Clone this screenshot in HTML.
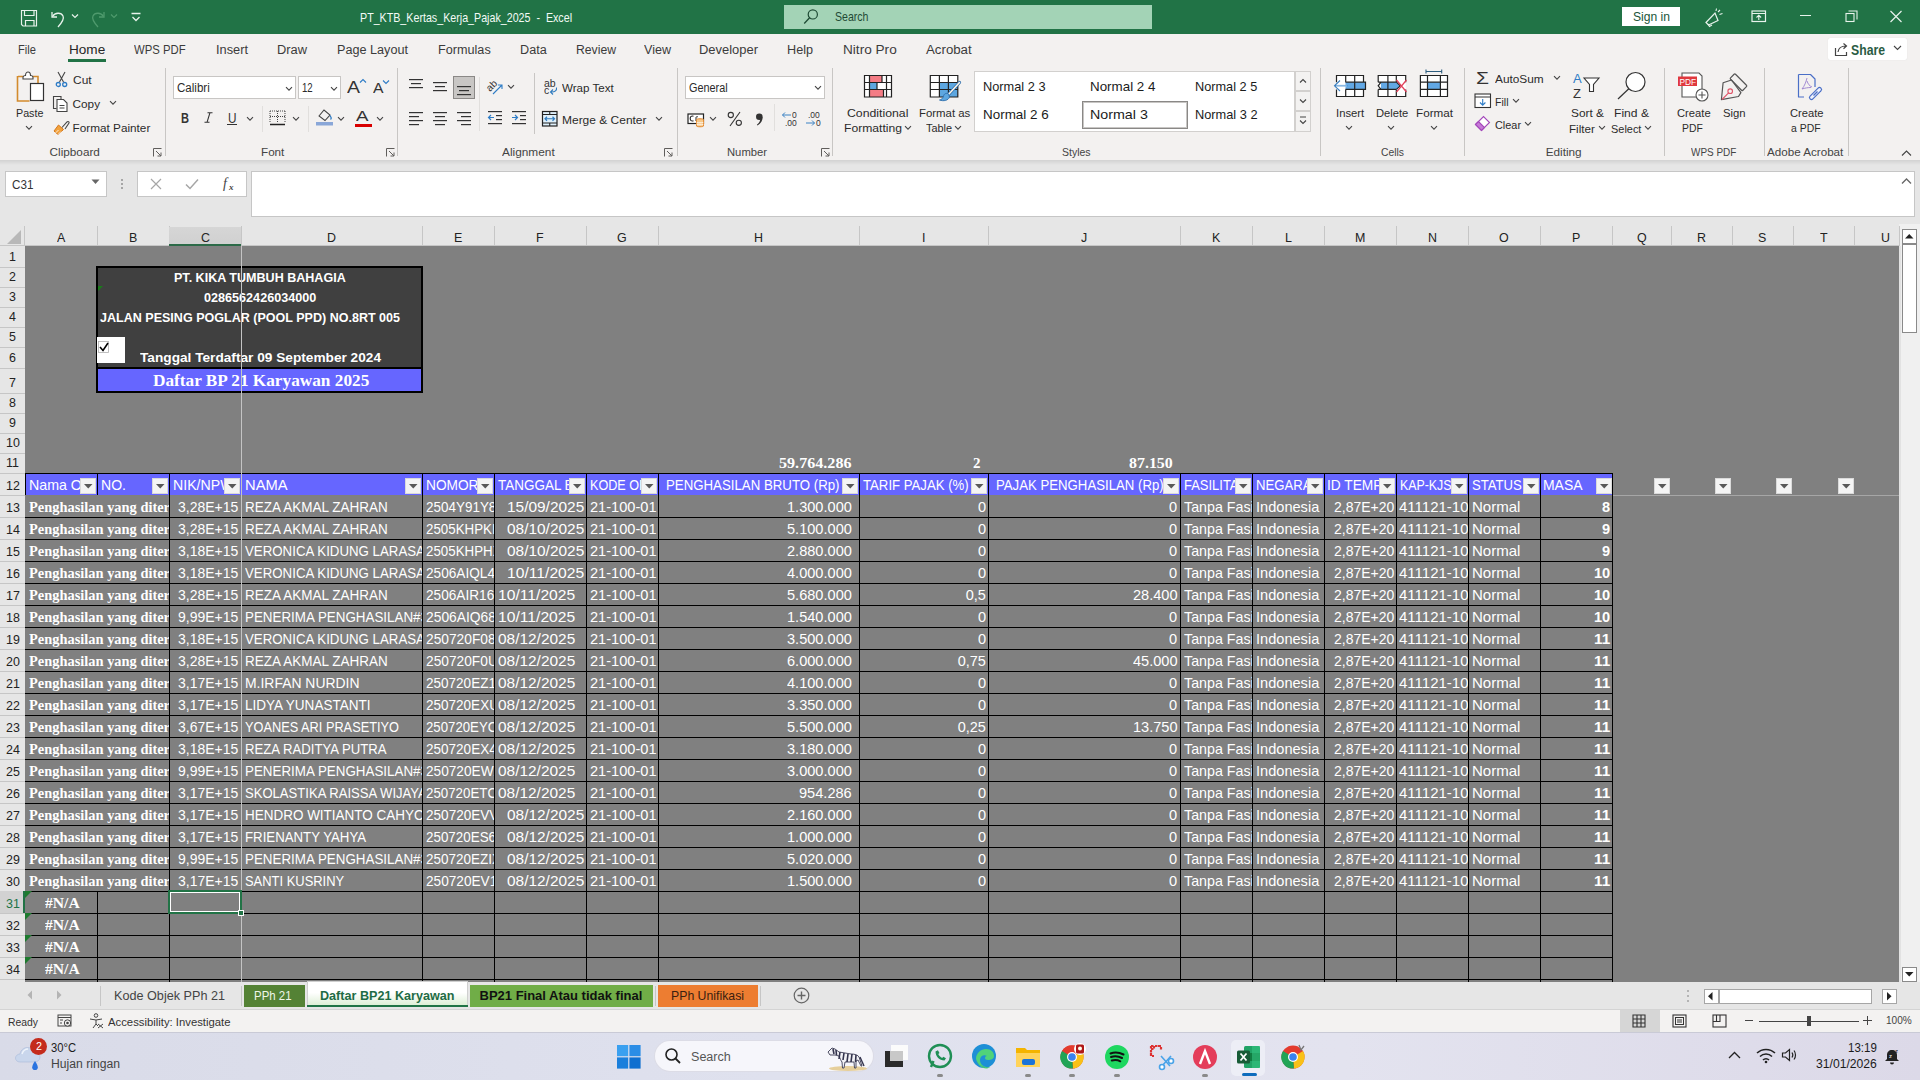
<!DOCTYPE html><html><head><meta charset="utf-8"><style>
html,body{margin:0;padding:0;width:1920px;height:1080px;overflow:hidden;background:#fff;font-family:'Liberation Sans',sans-serif}
.r{position:absolute;margin:0;padding:0}
.t{position:absolute;white-space:pre;line-height:1;transform-origin:0 0}
svg{overflow:visible}
</style></head><body>
<div class="r" style="left:0px;top:0px;width:1920px;height:34px;background:#217346;"></div>
<svg class="r" style="left:20px;top:9px" width="18" height="18" viewBox="0 0 18 18"><path d="M1.5 1.5h15v15.5H3L1.5 15.5z" fill="none" stroke="#e8f3ec" stroke-width="1.2"/><path d="M4.5 1.5v5h9.5v-5M5.5 17v-5.5h8.5V17" fill="none" stroke="#e8f3ec" stroke-width="1.2"/></svg>
<svg class="r" style="left:48px;top:8px" width="20" height="20" viewBox="0 0 20 20"><path d="M4 4v5h5" fill="none" stroke="#e8f3ec" stroke-width="1.3"/><path d="M4.5 8.5C7 4.5 13 4 15 8c1.5 3-0.5 6-5 11" fill="none" stroke="#e8f3ec" stroke-width="1.3"/></svg>
<svg class="r" style="left:71px;top:13px" width="8" height="6" viewBox="0 0 8 6"><path d="M1 1.5l3 3 3-3" fill="none" stroke="#e8f3ec" stroke-width="1.2"/></svg>
<svg class="r" style="left:88px;top:8px" width="20" height="20" viewBox="0 0 20 20"><path d="M16 4v5h-5" fill="none" stroke="#4f9a6d" stroke-width="1.3"/><path d="M15.5 8.5C13 4.5 7 4 5 8c-1.5 3 0.5 6 5 11" fill="none" stroke="#4f9a6d" stroke-width="1.3"/></svg>
<svg class="r" style="left:110px;top:13px" width="8" height="6" viewBox="0 0 8 6"><path d="M1 1.5l3 3 3-3" fill="none" stroke="#4f9a6d" stroke-width="1.2"/></svg>
<svg class="r" style="left:130px;top:12px" width="12" height="10" viewBox="0 0 12 10"><path d="M1.5 1.5h9M2.5 5l3.5 3.5 3.5-3.5" fill="none" stroke="#e8f3ec" stroke-width="1.3"/></svg>
<div class="t" style="left:360.00px;top:12px;font-size:12.75px;color:#f4fbf6;transform:scaleX(0.8380);">PT_KTB_Kertas_Kerja_Pajak_2025  -  Excel</div>
<div class="r" style="left:784px;top:5px;width:368px;height:24px;background:#a3d3b6;"></div>
<svg class="r" style="left:802px;top:8px" width="16" height="18" viewBox="0 0 16 18"><circle cx="10.8" cy="6.4" r="4.6" fill="none" stroke="#1d4a33" stroke-width="1.2"/><path d="M7.6 9.8L2.2 15.5" stroke="#1d4a33" stroke-width="1.3"/></svg>
<div class="t" style="left:834.50px;top:11px;font-size:12.75px;color:#1f4a35;transform:scaleX(0.8293);">Search</div>
<div class="r" style="left:1622px;top:7px;width:58px;height:19px;background:#ffffff;"></div>
<div class="t" style="left:1633.00px;top:10px;font-size:13.0px;color:#21553a;transform:scaleX(0.9309);">Sign in</div>
<svg class="r" style="left:1703px;top:8px" width="22" height="20" viewBox="0 0 22 20"><path d="M3 14.5l9-9.5 3 7.5-9.5 4.5z" fill="none" stroke="#e8f3ec" stroke-width="1.2"/><path d="M5 16l1.5 2.5 2.5-1.5" fill="none" stroke="#e8f3ec" stroke-width="1.2"/><path d="M15 4l2-2M16.5 6.5l3-1M13 3l0.5-2.5" stroke="#e8f3ec" stroke-width="1.1"/></svg>
<svg class="r" style="left:1751px;top:10px" width="16" height="13" viewBox="0 0 16 13"><rect x="1" y="1" width="13.5" height="10.5" fill="none" stroke="#e8f3ec" stroke-width="1.2"/><path d="M1 3.5h13.5M7.8 10V5.5M5.5 7.5l2.3-2.3 2.3 2.3" fill="none" stroke="#e8f3ec" stroke-width="1.1"/></svg>
<div class="r" style="left:1800px;top:15px;width:11px;height:1px;background:#e8f3ec;"></div>
<svg class="r" style="left:1845px;top:10px" width="13" height="13" viewBox="0 0 13 13"><rect x="1" y="3.5" width="8" height="8" fill="none" stroke="#e8f3ec" stroke-width="1.1"/><path d="M3.5 1h8.5v8.5" fill="none" stroke="#e8f3ec" stroke-width="1.1"/></svg>
<svg class="r" style="left:1889px;top:10px" width="14" height="13" viewBox="0 0 14 13"><path d="M1.5 1l11 11M12.5 1l-11 11" stroke="#e8f3ec" stroke-width="1.2"/></svg>
<div class="r" style="left:0px;top:34px;width:1920px;height:126px;background:#f3f1f0;"></div>
<div class="t" style="left:17.50px;top:43px;font-size:13.25px;color:#3b3b3b;transform:scaleX(0.8384);">File</div>
<div class="t" style="left:68.50px;top:43px;font-size:13.5px;color:#262626;transform:scaleX(1.0053);">Home</div>
<div class="t" style="left:134.40px;top:43px;font-size:13.25px;color:#3b3b3b;transform:scaleX(0.8548);">WPS PDF</div>
<div class="t" style="left:216.00px;top:43px;font-size:13.25px;color:#3b3b3b;transform:scaleX(0.9657);">Insert</div>
<div class="t" style="left:277.00px;top:43px;font-size:13.25px;color:#3b3b3b;transform:scaleX(0.9703);">Draw</div>
<div class="t" style="left:337.00px;top:43px;font-size:13.25px;color:#3b3b3b;transform:scaleX(0.9543);">Page Layout</div>
<div class="t" style="left:438.00px;top:43px;font-size:13.25px;color:#3b3b3b;transform:scaleX(0.9544);">Formulas</div>
<div class="t" style="left:520.00px;top:43px;font-size:13.25px;color:#3b3b3b;transform:scaleX(0.9540);">Data</div>
<div class="t" style="left:576.00px;top:43px;font-size:13.25px;color:#3b3b3b;transform:scaleX(0.9207);">Review</div>
<div class="t" style="left:644.00px;top:43px;font-size:13.25px;color:#3b3b3b;transform:scaleX(0.9481);">View</div>
<div class="t" style="left:699.00px;top:43px;font-size:13.25px;color:#3b3b3b;transform:scaleX(0.9770);">Developer</div>
<div class="t" style="left:787.00px;top:43px;font-size:13.25px;color:#3b3b3b;transform:scaleX(0.9541);">Help</div>
<div class="t" style="left:843.00px;top:43px;font-size:13.25px;color:#3b3b3b;transform:scaleX(1.0273);">Nitro Pro</div>
<div class="t" style="left:926.00px;top:43px;font-size:13.25px;color:#3b3b3b;">Acrobat</div>
<div class="r" style="left:68px;top:59px;width:38px;height:3px;background:#217346;"></div>
<div class="r" style="left:1828px;top:38px;width:79px;height:22px;background:#ffffff;border-radius:2px;box-shadow:0 0 1px #d0d0d0"></div>
<svg class="r" style="left:1834px;top:42px" width="16" height="15" viewBox="0 0 16 15"><path d="M1.5 6v7.5h11V10" fill="none" stroke="#444" stroke-width="1.2"/><path d="M4 10c0.5-4 3.5-6 8-6M9.5 1.5l3 2.5-3 2.7" fill="none" stroke="#444" stroke-width="1.2"/></svg>
<div class="t" style="left:1851.00px;top:43px;font-size:14.0px;color:#2a5c43;font-weight:700;transform:scaleX(0.8738);">Share</div>
<svg class="r" style="left:1893px;top:45px" width="9" height="6" viewBox="0 0 9 6"><path d="M1 1l3.5 3.5L8 1" fill="none" stroke="#444" stroke-width="1.1"/></svg>
<svg class="r" style="left:16px;top:71px" width="30" height="32" viewBox="0 0 30 32"><path d="M2 5.5h5M17 5.5h5V19" fill="none" stroke="#d38b2d" stroke-width="1.6"/><path d="M1.5 5v25h12" fill="none" stroke="#d38b2d" stroke-width="1.6"/><path d="M7 6.5c0-2 1.5-2 2.5-2 0-2.5 1.5-3.5 2.5-3.5s2.5 1 2.5 3.5c1 0 2.5 0 2.5 2v1.5H7z" fill="#fff" stroke="#444" stroke-width="1.1"/><rect x="14.5" y="12.5" width="13" height="17" fill="#fff" stroke="#333" stroke-width="1.2"/></svg>
<div class="t" style="left:15.60px;top:107px;font-size:11.75px;color:#2b2b2b;transform:scaleX(0.9120);">Paste</div>
<svg class="r" style="left:25px;top:125px" width="8" height="6" viewBox="0 0 8 6"><path d="M1 1.2l3 3 3-3" fill="none" stroke="#444" stroke-width="1.1"/></svg>
<svg class="r" style="left:55px;top:71px" width="13" height="17" viewBox="0 0 13 17"><path d="M3 1l5.5 10M10 1L4.5 11" stroke="#444" stroke-width="1.1"/><circle cx="3.3" cy="13.5" r="2" fill="none" stroke="#2e7cc6" stroke-width="1.3"/><circle cx="9.7" cy="13.5" r="2" fill="none" stroke="#2e7cc6" stroke-width="1.3"/></svg>
<div class="t" style="left:72.60px;top:74px;font-size:11.75px;color:#2b2b2b;transform:scaleX(1.0173);">Cut</div>
<svg class="r" style="left:52px;top:95px" width="17" height="17" viewBox="0 0 17 17"><path d="M9 4.5V1.5H1.5v12h3" fill="none" stroke="#444" stroke-width="1.1"/><path d="M5 4.5h6.5l3.5 3.5v8.5H5z" fill="#fff" stroke="#444" stroke-width="1.1"/><path d="M7.5 10.5h5M7.5 13h5" stroke="#444" stroke-width="1"/></svg>
<div class="t" style="left:72.60px;top:98px;font-size:11.75px;color:#2b2b2b;">Copy</div>
<svg class="r" style="left:109px;top:100px" width="8" height="6" viewBox="0 0 8 6"><path d="M1 1.2l3 3 3-3" fill="none" stroke="#444" stroke-width="1.1"/></svg>
<svg class="r" style="left:53px;top:118px" width="17" height="17" viewBox="0 0 17 17"><path d="M9 9.5l5-5.5c1-1 2.5 0 2 1l-4 6" fill="none" stroke="#444" stroke-width="1.1"/><path d="M1 13l4.5-6 5 4.5-5.5 5z" fill="#f2a23c" stroke="#d3761b" stroke-width="1"/><path d="M2.5 15l3-3M5 16.5l3-3" stroke="#fff" stroke-width="0.8"/></svg>
<div class="t" style="left:72.60px;top:122px;font-size:11.75px;color:#2b2b2b;">Format Painter</div>
<div class="t" style="left:49.60px;top:146px;font-size:11.75px;color:#444444;">Clipboard</div>
<svg class="r" style="left:153px;top:148px" width="9" height="9" viewBox="0 0 9 9"><path d="M0.5 8.5V0.5h8M3 3l5 5M8 4.5V8H4.5" fill="none" stroke="#605e5c" stroke-width="1"/></svg>
<div class="r" style="left:165px;top:68px;width:1px;height:88px;background:#c8c6c4;"></div>
<div class="r" style="left:173px;top:76px;width:123px;height:23px;background:#ffffff;box-shadow:inset 0 0 0 1px #c8c6c4"></div>
<div class="t" style="left:176.80px;top:82px;font-size:12.5px;color:#2b2b2b;transform:scaleX(0.9231);">Calibri</div>
<svg class="r" style="left:285px;top:86px" width="8" height="6" viewBox="0 0 8 6"><path d="M1 1.2l3 3 3-3" fill="none" stroke="#444" stroke-width="1.1"/></svg>
<div class="r" style="left:298px;top:76px;width:43px;height:23px;background:#ffffff;box-shadow:inset 0 0 0 1px #c8c6c4"></div>
<div class="t" style="left:302.20px;top:82px;font-size:12.5px;color:#2b2b2b;transform:scaleX(0.7697);">12</div>
<svg class="r" style="left:330px;top:86px" width="8" height="6" viewBox="0 0 8 6"><path d="M1 1.2l3 3 3-3" fill="none" stroke="#444" stroke-width="1.1"/></svg>
<div class="t" style="left:347.00px;top:80px;font-size:16.75px;color:#333;transform:scaleX(1.1635);">A</div>
<svg class="r" style="left:359px;top:78px" width="8" height="6" viewBox="0 0 8 6"><path d="M1 4.5l3-3 3 3" fill="none" stroke="#2e7cc6" stroke-width="1.1"/></svg>
<div class="t" style="left:373.00px;top:82px;font-size:13.75px;color:#333;transform:scaleX(1.1448);">A</div>
<svg class="r" style="left:382px;top:79px" width="8" height="6" viewBox="0 0 8 6"><path d="M1 1.5l3 3 3-3" fill="none" stroke="#2e7cc6" stroke-width="1.1"/></svg>
<div class="t" style="left:180.50px;top:111px;font-size:14.5px;color:#333;font-weight:700;transform:scaleX(0.7640);">B</div>
<svg class="r" style="left:204px;top:112px" width="9" height="12" viewBox="0 0 9 12"><path d="M3.5 0.7h5M0.5 10.3h5M6 0.7L3 10.3" fill="none" stroke="#333" stroke-width="1.1"/></svg>
<div class="t" style="left:227.50px;top:111px;font-size:14.5px;color:#333;transform:scaleX(0.8117);">U</div>
<div class="r" style="left:227px;top:124px;width:10px;height:1px;background:#333;"></div>
<svg class="r" style="left:246px;top:116px" width="8" height="6" viewBox="0 0 8 6"><path d="M1 1.2l3 3 3-3" fill="none" stroke="#444" stroke-width="1.1"/></svg>
<div class="r" style="left:262px;top:106px;width:1px;height:26px;background:#e1dfdd;"></div>
<svg class="r" style="left:269px;top:110px" width="17" height="16" viewBox="0 0 17 16"><path d="M1 1h15M1 1v11M16 1v11M1 6.5h15M8.5 1v11" fill="none" stroke="#444" stroke-width="1" stroke-dasharray="1 1"/><path d="M1 14.5h15" stroke="#222" stroke-width="1.5"/></svg>
<svg class="r" style="left:292px;top:116px" width="8" height="6" viewBox="0 0 8 6"><path d="M1 1.2l3 3 3-3" fill="none" stroke="#444" stroke-width="1.1"/></svg>
<div class="r" style="left:308px;top:106px;width:1px;height:26px;background:#e1dfdd;"></div>
<svg class="r" style="left:315px;top:107px" width="19" height="19" viewBox="0 0 19 19"><path d="M4 9l5-6 6 5-5 5.5z" fill="none" stroke="#444" stroke-width="1.1"/><path d="M15 8.5c1 1.5 2 3 0.5 4" fill="none" stroke="#2e7cc6" stroke-width="1.2"/><rect x="1" y="15" width="17" height="3.5" fill="#8aa7d8"/></svg>
<svg class="r" style="left:337px;top:116px" width="8" height="6" viewBox="0 0 8 6"><path d="M1 1.2l3 3 3-3" fill="none" stroke="#444" stroke-width="1.1"/></svg>
<div class="t" style="left:356.00px;top:108px;font-size:15.25px;color:#333;transform:scaleX(1.2288);">A</div>
<div class="r" style="left:355px;top:124px;width:17px;height:3px;background:#d80000;"></div>
<svg class="r" style="left:376px;top:116px" width="8" height="6" viewBox="0 0 8 6"><path d="M1 1.2l3 3 3-3" fill="none" stroke="#444" stroke-width="1.1"/></svg>
<div class="t" style="left:261.40px;top:146px;font-size:11.75px;color:#444444;transform:scaleX(0.9932);">Font</div>
<svg class="r" style="left:386px;top:148px" width="9" height="9" viewBox="0 0 9 9"><path d="M0.5 8.5V0.5h8M3 3l5 5M8 4.5V8H4.5" fill="none" stroke="#605e5c" stroke-width="1"/></svg>
<div class="r" style="left:397px;top:68px;width:1px;height:88px;background:#c8c6c4;"></div>
<div class="r" style="left:453px;top:76px;width:22px;height:23px;background:#c8c6c4;box-shadow:inset 0 0 0 1px #8a8886"></div>
<svg class="r" style="left:409px;top:79px" width="15" height="10" viewBox="0 0 15 10"><rect x="0" y="0" width="14" height="1.2" fill="#333"/><rect x="2" y="4" width="10" height="1.2" fill="#333"/><rect x="0" y="8" width="14" height="1.2" fill="#333"/></svg>
<svg class="r" style="left:433px;top:82px" width="15" height="10" viewBox="0 0 15 10"><rect x="0" y="0" width="14" height="1.2" fill="#333"/><rect x="2" y="4" width="10" height="1.2" fill="#333"/><rect x="0" y="8" width="14" height="1.2" fill="#333"/></svg>
<svg class="r" style="left:457px;top:86px" width="15" height="10" viewBox="0 0 15 10"><rect x="0" y="0" width="14" height="1.2" fill="#333"/><rect x="2" y="4" width="10" height="1.2" fill="#333"/><rect x="0" y="8" width="14" height="1.2" fill="#333"/></svg>
<svg class="r" style="left:409px;top:112px" width="15" height="14" viewBox="0 0 15 14"><rect x="0" y="0" width="14" height="1.2" fill="#333"/><rect x="0" y="4" width="10" height="1.2" fill="#333"/><rect x="0" y="8" width="14" height="1.2" fill="#333"/><rect x="0" y="12" width="10" height="1.2" fill="#333"/></svg>
<svg class="r" style="left:433px;top:112px" width="15" height="14" viewBox="0 0 15 14"><rect x="0" y="0" width="14" height="1.2" fill="#333"/><rect x="2" y="4" width="10" height="1.2" fill="#333"/><rect x="0" y="8" width="14" height="1.2" fill="#333"/><rect x="2" y="12" width="10" height="1.2" fill="#333"/></svg>
<svg class="r" style="left:457px;top:112px" width="15" height="14" viewBox="0 0 15 14"><rect x="0" y="0" width="14" height="1.2" fill="#333"/><rect x="4" y="4" width="10" height="1.2" fill="#333"/><rect x="0" y="8" width="14" height="1.2" fill="#333"/><rect x="4" y="12" width="10" height="1.2" fill="#333"/></svg>
<svg class="r" style="left:486px;top:78px" width="22" height="18" viewBox="0 0 22 18"><text x="0" y="0" font-size="10" font-family="Liberation Sans" fill="#333" transform="translate(4 14) rotate(-45)">ab</text><path d="M7 16L16 7M12 7h4v4" fill="none" stroke="#2e7cc6" stroke-width="1.1"/></svg>
<svg class="r" style="left:507px;top:84px" width="8" height="6" viewBox="0 0 8 6"><path d="M1 1.2l3 3 3-3" fill="none" stroke="#444" stroke-width="1.1"/></svg>
<div class="r" style="left:479px;top:77px;width:1px;height:54px;background:#e1dfdd;"></div>
<svg class="r" style="left:487px;top:111px" width="16" height="14" viewBox="0 0 16 14"><rect x="1" y="0" width="14" height="1.2" fill="#333"/><rect x="9" y="4" width="6" height="1.2" fill="#333"/><rect x="9" y="8" width="6" height="1.2" fill="#333"/><rect x="1" y="12" width="14" height="1.2" fill="#333"/><path d="M7 6.5H1.5M4 4L1.5 6.5 4 9" fill="none" stroke="#2e7cc6" stroke-width="1.2"/></svg>
<svg class="r" style="left:511px;top:111px" width="16" height="14" viewBox="0 0 16 14"><rect x="1" y="0" width="14" height="1.2" fill="#333"/><rect x="9" y="4" width="6" height="1.2" fill="#333"/><rect x="9" y="8" width="6" height="1.2" fill="#333"/><rect x="1" y="12" width="14" height="1.2" fill="#333"/><path d="M1 6.5h5.5M4 4l2.5 2.5L4 9" fill="none" stroke="#2e7cc6" stroke-width="1.2"/></svg>
<div class="r" style="left:534px;top:73px;width:1px;height:61px;background:#c8c6c4;"></div>
<svg class="r" style="left:543px;top:77px" width="16" height="19" viewBox="0 0 16 19"><text x="1" y="9.5" font-size="10.5" font-family="Liberation Sans" fill="#333">ab</text><text x="1" y="17" font-size="10.5" font-family="Liberation Sans" fill="#333">c</text><path d="M13.5 10.5c0.5 3-1.5 4.5-5 4.5M10 12.5L7.5 15 10 17.5" fill="none" stroke="#2f7bbf" stroke-width="1.1"/></svg>
<div class="t" style="left:561.50px;top:82px;font-size:11.75px;color:#2b2b2b;transform:scaleX(0.9855);">Wrap Text</div>
<svg class="r" style="left:541px;top:110px" width="18" height="17" viewBox="0 0 18 17"><rect x="1.5" y="1.5" width="14.5" height="14.5" fill="#dff0fb" stroke="#222" stroke-width="1.2"/><path d="M1.5 4.5h14.5M1.5 13h14.5M8.75 1.5v3M8.75 13v3" fill="none" stroke="#222" stroke-width="1.1"/><path d="M4 8.75h9.5M6 6.8L4 8.75l2 2M11.5 6.8l2 1.95-2 2" fill="none" stroke="#2f7bbf" stroke-width="1.2"/></svg>
<div class="t" style="left:561.50px;top:114px;font-size:11.75px;color:#2b2b2b;transform:scaleX(1.0189);">Merge &amp; Center</div>
<svg class="r" style="left:655px;top:116px" width="8" height="6" viewBox="0 0 8 6"><path d="M1 1.2l3 3 3-3" fill="none" stroke="#444" stroke-width="1.1"/></svg>
<div class="t" style="left:502.30px;top:146px;font-size:11.75px;color:#444444;transform:scaleX(1.0087);">Alignment</div>
<svg class="r" style="left:664px;top:148px" width="9" height="9" viewBox="0 0 9 9"><path d="M0.5 8.5V0.5h8M3 3l5 5M8 4.5V8H4.5" fill="none" stroke="#605e5c" stroke-width="1"/></svg>
<div class="r" style="left:677px;top:68px;width:1px;height:88px;background:#c8c6c4;"></div>
<div class="r" style="left:685px;top:76px;width:140px;height:23px;background:#ffffff;box-shadow:inset 0 0 0 1px #c8c6c4"></div>
<div class="t" style="left:688.80px;top:82px;font-size:12.5px;color:#2b2b2b;transform:scaleX(0.8681);">General</div>
<svg class="r" style="left:814px;top:85px" width="8" height="6" viewBox="0 0 8 6"><path d="M1 1.2l3 3 3-3" fill="none" stroke="#444" stroke-width="1.1"/></svg>
<svg class="r" style="left:687px;top:113px" width="19" height="15" viewBox="0 0 19 15"><rect x="1" y="1" width="15.5" height="9.5" fill="#fff" stroke="#222" stroke-width="1.2"/><path d="M6.5 3.3c-2-.8-3.3.3-3.3 2.2s1.3 3 3.3 2.2" fill="none" stroke="#222" stroke-width="1.1"/><path d="M9 8V4.5c0-1 1.5-1 2-.5" fill="none" stroke="#222" stroke-width="1"/><path d="M9.5 6.5c0-1 7-1 7 0v6.5c0 1-7 1-7 0z" fill="#f7c98b" stroke="#e3892f" stroke-width="1"/><path d="M9.5 9c0 1 7 1 7 0M9.5 11c0 1 7 1 7 0" fill="none" stroke="#fff" stroke-width="0.8"/></svg>
<svg class="r" style="left:709px;top:116px" width="8" height="6" viewBox="0 0 8 6"><path d="M1 1.2l3 3 3-3" fill="none" stroke="#444" stroke-width="1.1"/></svg>
<svg class="r" style="left:727px;top:111px" width="16" height="16" viewBox="0 0 16 16"><circle cx="3.8" cy="4" r="2.6" fill="none" stroke="#333" stroke-width="1.1"/><circle cx="11.8" cy="11.8" r="2.6" fill="none" stroke="#333" stroke-width="1.1"/><path d="M13 1L3 15" stroke="#333" stroke-width="1.1"/></svg>
<svg class="r" style="left:755px;top:113px" width="9" height="13" viewBox="0 0 9 13"><circle cx="4.3" cy="3.8" r="3.3" fill="#333"/><path d="M7.5 4c0.3 3.5-1.5 6.5-5 8.5l-0.6-0.8c2.5-1.7 3.5-4 3.3-6.5z" fill="#333"/></svg>
<div class="r" style="left:774px;top:104px;width:1px;height:27px;background:#e1dfdd;"></div>
<svg class="r" style="left:781px;top:110px" width="18" height="18" viewBox="0 0 18 18"><text x="11" y="7.5" font-size="8.5" font-family="Liberation Sans" fill="#333">0</text><text x="4" y="16" font-size="8.5" font-family="Liberation Sans" fill="#333">.00</text><path d="M10 5H1.5M4 2.5L1.5 5 4 7.5" fill="none" stroke="#3b82c4" stroke-width="1"/></svg>
<svg class="r" style="left:805px;top:110px" width="18" height="18" viewBox="0 0 18 18"><text x="3" y="7.5" font-size="8.5" font-family="Liberation Sans" fill="#333">.00</text><text x="11" y="16" font-size="8.5" font-family="Liberation Sans" fill="#333">0</text><path d="M1 13h8.5M7 10.5L9.5 13 7 15.5" fill="none" stroke="#3b82c4" stroke-width="1"/></svg>
<div class="t" style="left:726.80px;top:146px;font-size:11.75px;color:#444444;transform:scaleX(0.9572);">Number</div>
<svg class="r" style="left:821px;top:148px" width="9" height="9" viewBox="0 0 9 9"><path d="M0.5 8.5V0.5h8M3 3l5 5M8 4.5V8H4.5" fill="none" stroke="#605e5c" stroke-width="1"/></svg>
<div class="r" style="left:832px;top:68px;width:1px;height:88px;background:#c8c6c4;"></div>
<svg class="r" style="left:863px;top:74px" width="30" height="24" viewBox="0 0 30 24"><rect x="1.5" y="1.5" width="27" height="21.5" fill="#fff"/><rect x="6.5" y="1.5" width="12.5" height="7" fill="#f47c85"/><rect x="6.5" y="8.5" width="7.5" height="7" fill="#5ea7e0"/><rect x="6.5" y="15.5" width="14" height="7.5" fill="#f47c85"/><path d="M1.5 1.5h27v21.5h-27zM1.5 8.5h27M1.5 15.5h27M6.5 1.5v21.5M23.5 1.5v21.5M19 1.5v7M14 8.5v7M20.5 15.5v7.5" fill="none" stroke="#222" stroke-width="1.2"/></svg>
<div class="t" style="left:847.20px;top:107px;font-size:11.75px;color:#2b2b2b;transform:scaleX(1.0445);">Conditional</div>
<div class="t" style="left:843.50px;top:122px;font-size:11.75px;color:#2b2b2b;transform:scaleX(1.0329);">Formatting</div>
<svg class="r" style="left:904px;top:125px" width="8" height="6" viewBox="0 0 8 6"><path d="M1 1.2l3 3 3-3" fill="none" stroke="#444" stroke-width="1.1"/></svg>
<svg class="r" style="left:929px;top:74px" width="34" height="30" viewBox="0 0 34 30"><rect x="1.3" y="1.5" width="27.5" height="21.5" fill="#fff"/><rect x="10.4" y="8.5" width="18.4" height="14.5" fill="#5ea7e0"/><path d="M1.3 1.5h27.5v21.5H1.3zM1.3 8.5h27.5M1.3 15.5h27.5M10.4 1.5v21.5M19.4 1.5v21.5" fill="none" stroke="#222" stroke-width="1.2"/><path d="M30.5 8.5L19 21" stroke="#2f6fad" stroke-width="3.2" stroke-linecap="round"/><path d="M30.5 8.5L19 21" stroke="#fdf3e6" stroke-width="1.6" stroke-linecap="round"/><path d="M19.5 20c-2.5-1.5-4.5 0-5 2-.5 2.5-2 3.5-4 4 4 1.5 9 .5 10-3z" fill="#5ea7e0" stroke="#2f6fad" stroke-width="0.9"/></svg>
<div class="t" style="left:918.50px;top:107px;font-size:11.75px;color:#2b2b2b;transform:scaleX(0.9701);">Format as</div>
<div class="t" style="left:925.80px;top:122px;font-size:11.75px;color:#2b2b2b;transform:scaleX(0.9257);">Table</div>
<svg class="r" style="left:954px;top:125px" width="8" height="6" viewBox="0 0 8 6"><path d="M1 1.2l3 3 3-3" fill="none" stroke="#444" stroke-width="1.1"/></svg>
<div class="r" style="left:974px;top:71px;width:321px;height:61px;background:#ffffff;box-shadow:inset 0 0 0 1px #d2d0ce"></div>
<div class="t" style="left:983.10px;top:80px;font-size:13.5px;color:#1b1b1b;transform:scaleX(0.9467);">Normal 2 3</div>
<div class="t" style="left:1089.60px;top:80px;font-size:13.5px;color:#1b1b1b;transform:scaleX(0.9906);">Normal 2 4</div>
<div class="t" style="left:1195.40px;top:80px;font-size:13.5px;color:#1b1b1b;transform:scaleX(0.9421);">Normal 2 5</div>
<div class="t" style="left:983.10px;top:108px;font-size:13.5px;color:#1b1b1b;transform:scaleX(0.9944);">Normal 2 6</div>
<div class="t" style="left:1089.90px;top:108px;font-size:13.5px;color:#1b1b1b;transform:scaleX(1.0555);">Normal 3</div>
<div class="t" style="left:1195.40px;top:108px;font-size:13.5px;color:#1b1b1b;transform:scaleX(0.9467);">Normal 3 2</div>
<div class="r" style="left:1082px;top:101px;width:106px;height:28px;box-shadow:inset 0 0 0 1px #8a8886,inset 0 0 0 2px #c8c6c4"></div>
<div class="r" style="left:1295px;top:71px;width:16px;height:20px;background:#f3f2f1;box-shadow:inset 0 0 0 1px #d2d0ce"></div>
<div class="r" style="left:1295px;top:91px;width:16px;height:20px;background:#f3f2f1;box-shadow:inset 0 0 0 1px #d2d0ce"></div>
<div class="r" style="left:1295px;top:111px;width:16px;height:21px;background:#f3f2f1;box-shadow:inset 0 0 0 1px #d2d0ce"></div>
<svg class="r" style="left:1299px;top:78px" width="8" height="6" viewBox="0 0 8 6"><path d="M1 4.5l3-3 3 3" fill="none" stroke="#444" stroke-width="1.1"/></svg>
<svg class="r" style="left:1299px;top:98px" width="8" height="6" viewBox="0 0 8 6"><path d="M1 1.5l3 3 3-3" fill="none" stroke="#444" stroke-width="1.1"/></svg>
<svg class="r" style="left:1299px;top:116px" width="8" height="10" viewBox="0 0 8 10"><path d="M1 1h6M1 4.5l3 3 3-3" fill="none" stroke="#444" stroke-width="1.1"/></svg>
<div class="t" style="left:1061.80px;top:146px;font-size:11.75px;color:#444444;transform:scaleX(0.8938);">Styles</div>
<div class="r" style="left:1320px;top:68px;width:1px;height:88px;background:#c8c6c4;"></div>
<svg class="r" style="left:1332px;top:74px" width="36" height="24" viewBox="0 0 36 24"><rect x="4.5" y="1.5" width="27" height="21" fill="#fff"/><rect x="13.5" y="8.2" width="20" height="7.2" fill="#62a8e5"/><path d="M4.5 8.2V1.5h27v6.7M4.5 15.4v7.1h27v-7.1M13.7 1.5v6.7M22.7 1.5v21M13.7 15.4v7.1M13.5 8.2h20v7.2h-20" fill="none" stroke="#222" stroke-width="1.2"/><path d="M15.5 11.8H2.5M8 6.5L2.5 11.8 8 17" fill="none" stroke="#3b7fbf" stroke-width="1.1"/><path d="M15 11.8H4" stroke="#9cc7ec" stroke-width="2.2" opacity="0.6"/></svg>
<div class="t" style="left:1335.50px;top:107px;font-size:11.75px;color:#2b2b2b;transform:scaleX(0.9597);">Insert</div>
<svg class="r" style="left:1345px;top:125px" width="8" height="6" viewBox="0 0 8 6"><path d="M1 1.2l3 3 3-3" fill="none" stroke="#444" stroke-width="1.1"/></svg>
<svg class="r" style="left:1376px;top:74px" width="34" height="24" viewBox="0 0 34 24"><rect x="2.2" y="1.5" width="27.5" height="21" fill="#fff"/><rect x="5" y="8.2" width="17" height="7.2" fill="#62a8e5"/><path d="M2.2 8.2V1.5h27.5v6.7M2.2 15.4v7.1h27.5v-7.1M11.9 1.5v21M20.3 1.5v6.7M20.3 15.4v7.1M2.2 8.2h18M2.2 15.4h18M5 8.2l-2.8 3.6 2.8 3.6" fill="none" stroke="#222" stroke-width="1.2"/><path d="M20.3 8.2l4 3.6-4 3.6" fill="#62a8e5" stroke="#222" stroke-width="1.1"/><path d="M20.5 6l10 12M30.5 6l-10 12" stroke="#e5405a" stroke-width="1.2"/></svg>
<div class="t" style="left:1375.60px;top:107px;font-size:11.75px;color:#2b2b2b;transform:scaleX(0.9510);">Delete</div>
<svg class="r" style="left:1387px;top:125px" width="8" height="6" viewBox="0 0 8 6"><path d="M1 1.2l3 3 3-3" fill="none" stroke="#444" stroke-width="1.1"/></svg>
<svg class="r" style="left:1419px;top:69px" width="32" height="30" viewBox="0 0 32 30"><rect x="1.4" y="6.5" width="27.1" height="21" fill="#fff"/><rect x="8.5" y="13.2" width="12.9" height="7.2" fill="#62a8e5"/><path d="M1.4 6.5h27.1v21H1.4zM1.4 13.2h27.1M1.4 20.4h27.1M8.5 6.5v21M21.4 6.5v21" fill="none" stroke="#222" stroke-width="1.2"/><path d="M7 2.5h15.7M7 0.5v4M22.7 0.5v4" fill="none" stroke="#2f5f80" stroke-width="1.1"/></svg>
<div class="t" style="left:1415.70px;top:107px;font-size:11.75px;color:#2b2b2b;transform:scaleX(0.9944);">Format</div>
<svg class="r" style="left:1430px;top:125px" width="8" height="6" viewBox="0 0 8 6"><path d="M1 1.2l3 3 3-3" fill="none" stroke="#444" stroke-width="1.1"/></svg>
<div class="t" style="left:1380.50px;top:146px;font-size:11.75px;color:#444444;transform:scaleX(0.8807);">Cells</div>
<div class="r" style="left:1464px;top:68px;width:1px;height:88px;background:#c8c6c4;"></div>
<div class="t" style="left:1476.00px;top:71px;font-size:16.0px;color:#333;transform:scaleX(1.3145);">Σ</div>
<div class="t" style="left:1494.60px;top:73px;font-size:11.75px;color:#2b2b2b;transform:scaleX(1.0077);">AutoSum</div>
<svg class="r" style="left:1553px;top:75px" width="8" height="6" viewBox="0 0 8 6"><path d="M1 1.2l3 3 3-3" fill="none" stroke="#444" stroke-width="1.1"/></svg>
<svg class="r" style="left:1474px;top:93px" width="18" height="16" viewBox="0 0 18 16"><rect x="1" y="1" width="15.5" height="13.5" fill="#fff" stroke="#333" stroke-width="1.1"/><path d="M1 4h15.5" stroke="#333"/><path d="M8.7 6v6M6 9.5l2.7 2.7 2.7-2.7" fill="none" stroke="#2e7cc6" stroke-width="1.1"/></svg>
<div class="t" style="left:1494.60px;top:96px;font-size:11.75px;color:#2b2b2b;transform:scaleX(0.8995);">Fill</div>
<svg class="r" style="left:1512px;top:98px" width="8" height="6" viewBox="0 0 8 6"><path d="M1 1.2l3 3 3-3" fill="none" stroke="#444" stroke-width="1.1"/></svg>
<svg class="r" style="left:1474px;top:115px" width="17" height="16" viewBox="0 0 17 16"><path d="M1.5 9.5l8-8 6 6-8 8z" fill="#fff" stroke="#a347ba" stroke-width="1.1"/><path d="M1.5 9.5l3-3 6 6-3 3z" fill="#c77ad8" stroke="#a347ba" stroke-width="1.1"/></svg>
<div class="t" style="left:1494.60px;top:119px;font-size:11.75px;color:#2b2b2b;transform:scaleX(0.9260);">Clear</div>
<svg class="r" style="left:1524px;top:121px" width="8" height="6" viewBox="0 0 8 6"><path d="M1 1.2l3 3 3-3" fill="none" stroke="#444" stroke-width="1.1"/></svg>
<svg class="r" style="left:1572px;top:71px" width="32" height="30" viewBox="0 0 32 30"><text x="1" y="12" font-size="13" font-family="Liberation Sans" fill="#2e7cc6">A</text><text x="1" y="27" font-size="13" font-family="Liberation Sans" fill="#333">Z</text><path d="M12 7h15l-5.5 6.5v7h-4v-7z" fill="#fff" stroke="#333" stroke-width="1.1"/></svg>
<div class="t" style="left:1571.20px;top:107px;font-size:11.75px;color:#2b2b2b;transform:scaleX(1.0107);">Sort &amp;</div>
<div class="t" style="left:1569.40px;top:123px;font-size:11.75px;color:#2b2b2b;transform:scaleX(0.9882);">Filter</div>
<svg class="r" style="left:1598px;top:125px" width="8" height="6" viewBox="0 0 8 6"><path d="M1 1.2l3 3 3-3" fill="none" stroke="#444" stroke-width="1.1"/></svg>
<svg class="r" style="left:1616px;top:71px" width="32" height="29" viewBox="0 0 32 29"><circle cx="19.5" cy="11" r="9.5" fill="#fff" stroke="#333" stroke-width="1.2"/><path d="M12.8 17.7L2 28" stroke="#333" stroke-width="1.2"/></svg>
<div class="t" style="left:1614.40px;top:107px;font-size:11.75px;color:#2b2b2b;transform:scaleX(1.0307);">Find &amp;</div>
<div class="t" style="left:1611.30px;top:123px;font-size:11.75px;color:#2b2b2b;transform:scaleX(0.9309);">Select</div>
<svg class="r" style="left:1644px;top:125px" width="8" height="6" viewBox="0 0 8 6"><path d="M1 1.2l3 3 3-3" fill="none" stroke="#444" stroke-width="1.1"/></svg>
<div class="t" style="left:1545.70px;top:146px;font-size:11.75px;color:#444444;">Editing</div>
<div class="r" style="left:1664px;top:68px;width:1px;height:88px;background:#c8c6c4;"></div>
<svg class="r" style="left:1678px;top:71px" width="32" height="30" viewBox="0 0 32 30"><path d="M4 2h17l3 3v21H4z" fill="#fff" stroke="#555" stroke-width="1.1"/><rect x="0" y="5.5" width="19" height="9.5" fill="#e0393e"/><text x="1.5" y="13.5" font-size="8.3" font-family="Liberation Sans" fill="#fff">PDF</text><circle cx="24" cy="24" r="6" fill="#fff" stroke="#555" stroke-width="1.1"/><path d="M24 20.5v7M20.5 24h7" stroke="#555" stroke-width="1.1"/></svg>
<div class="t" style="left:1676.50px;top:107px;font-size:11.75px;color:#2b2b2b;transform:scaleX(0.9528);">Create</div>
<div class="t" style="left:1682.30px;top:122px;font-size:11.75px;color:#2b2b2b;transform:scaleX(0.8809);">PDF</div>
<svg class="r" style="left:1719px;top:72px" width="34" height="30" viewBox="0 0 34 30"><rect x="16" y="1.5" width="7" height="17.5" rx="1" transform="rotate(-45 19.5 10.25)" fill="none" stroke="#555" stroke-width="1.2"/><path d="M4.1 10.8L12.5 8 21.9 20.6 19.5 24.5 2.4 27.7z" fill="none" stroke="#555" stroke-width="1.2" stroke-linejoin="round"/><circle cx="11.2" cy="19.2" r="2.3" fill="none" stroke="#e0566a" stroke-width="1.1"/><path d="M9.6 20.8L3 27.5" stroke="#e0566a" stroke-width="1.1"/></svg>
<div class="t" style="left:1723.00px;top:107px;font-size:11.75px;color:#2b2b2b;transform:scaleX(0.9610);">Sign</div>
<div class="t" style="left:1691.10px;top:146px;font-size:11.75px;color:#444444;transform:scaleX(0.8481);">WPS PDF</div>
<div class="r" style="left:1764px;top:68px;width:1px;height:88px;background:#c8c6c4;"></div>
<svg class="r" style="left:1795px;top:72px" width="30" height="30" viewBox="0 0 30 30"><path d="M3.5 2.5h12l4.5 4.5v8M9 25H3.5V2.5" fill="none" stroke="#4a6fc7" stroke-width="1.2" stroke-linejoin="round"/><path d="M12 6c-1 4-2.5 8-5 11M12 9c1 3 2.5 5 5 6M7 17c3-1 6-1.5 9-1.5" fill="none" stroke="#9a80cf" stroke-width="0.9"/><path d="M16.5 25.5l8-8" stroke="#4a6fc7" stroke-width="5.2" stroke-linecap="round"/><path d="M16.5 25.5l8-8" stroke="#eef1fb" stroke-width="2.8" stroke-linecap="round"/><path d="M18.5 23.5l4-4" stroke="#4a6fc7" stroke-width="1.2"/></svg>
<div class="t" style="left:1789.70px;top:107px;font-size:11.75px;color:#2b2b2b;transform:scaleX(0.9500);">Create</div>
<div class="t" style="left:1791.30px;top:122px;font-size:11.75px;color:#2b2b2b;transform:scaleX(0.8889);">a PDF</div>
<div class="t" style="left:1767.20px;top:146px;font-size:11.75px;color:#444444;transform:scaleX(0.9899);">Adobe Acrobat</div>
<div class="r" style="left:1848px;top:68px;width:1px;height:88px;background:#c8c6c4;"></div>
<svg class="r" style="left:1901px;top:150px" width="11" height="7" viewBox="0 0 11 7"><path d="M1 5.5l4.5-4.5 4.5 4.5" fill="none" stroke="#444" stroke-width="1.1"/></svg>
<div class="r" style="left:0px;top:160px;width:1920px;height:64px;background:#e6e6e6;"></div>
<div class="r" style="left:0px;top:160px;width:1920px;height:5px;background:linear-gradient(#d2d2d2,#e6e6e6)"></div>
<div class="r" style="left:5px;top:171px;width:102px;height:26px;background:#ffffff;box-shadow:inset 0 0 0 1px #c6c6c6"></div>
<div class="t" style="left:12.20px;top:178px;font-size:13.0px;color:#333;transform:scaleX(0.8974);">C31</div>
<svg class="r" style="left:91px;top:179px" width="9" height="6" viewBox="0 0 9 6"><path d="M0.5 0.5h8L4.5 5z" fill="#666"/></svg>
<div class="r" style="left:121px;top:179px;width:2px;height:2px;background:#a6a6a6;"></div>
<div class="r" style="left:121px;top:183px;width:2px;height:2px;background:#a6a6a6;"></div>
<div class="r" style="left:121px;top:187px;width:2px;height:2px;background:#a6a6a6;"></div>
<div class="r" style="left:137px;top:171px;width:110px;height:26px;background:#ffffff;box-shadow:inset 0 0 0 1px #c6c6c6"></div>
<svg class="r" style="left:150px;top:178px" width="12" height="12" viewBox="0 0 12 12"><path d="M1 1l10 10M11 1L1 11" stroke="#a6a6a6" stroke-width="1.2"/></svg>
<svg class="r" style="left:185px;top:178px" width="14" height="12" viewBox="0 0 14 12"><path d="M1 6.5l4 4L13 1.5" fill="none" stroke="#a6a6a6" stroke-width="1.5"/></svg>
<svg class="r" style="left:222px;top:176px" width="16" height="17" viewBox="0 0 16 17"><text x="1" y="12" font-size="14" font-style="italic" font-family="Liberation Serif" fill="#444">f</text><text x="7" y="14" font-size="9" font-style="italic" font-weight="bold" font-family="Liberation Serif" fill="#444">x</text></svg>
<div class="r" style="left:251px;top:171px;width:1664px;height:46px;background:#ffffff;box-shadow:inset 0 0 0 1px #c6c6c6"></div>
<svg class="r" style="left:1901px;top:178px" width="11" height="7" viewBox="0 0 11 7"><path d="M1 5.5l4.5-4.5 4.5 4.5" fill="none" stroke="#666" stroke-width="1.3"/></svg>
<div class="r" style="left:0px;top:224px;width:1920px;height:22px;background:#e6e6e6;"></div>
<div class="r" style="left:0px;top:246px;width:25px;height:736px;background:#e6e6e6;"></div>
<div class="r" style="left:1899px;top:224px;width:21px;height:758px;background:#f0f0f0;"></div>
<div class="r" style="left:1899px;top:246px;width:2px;height:736px;background:#e2e2e2;"></div>
<svg class="r" style="left:6px;top:229px" width="16" height="16" viewBox="0 0 16 16"><path d="M15 1v14H1z" fill="#b8b8b8"/></svg>
<div class="r" style="left:24px;top:226px;width:1px;height:20px;background:#c6c6c6;"></div>
<div class="r" style="left:0px;top:245px;width:1899px;height:1px;background:#c6c6c6;"></div>
<div class="r" style="left:97px;top:226px;width:1px;height:20px;background:#c6c6c6;"></div>
<div class="t" style="left:56.85px;top:231px;font-size:13.0px;color:#222;transform:scaleX(0.9573);">A</div>
<div class="r" style="left:169px;top:226px;width:1px;height:20px;background:#c6c6c6;"></div>
<div class="t" style="left:128.85px;top:231px;font-size:13.0px;color:#222;transform:scaleX(0.9573);">B</div>
<div class="r" style="left:169px;top:227px;width:72px;height:19px;background:linear-gradient(#d6d6d6,#d0d0d0)"></div>
<div class="r" style="left:169px;top:244px;width:72px;height:2px;background:#2c6a48;"></div>
<div class="r" style="left:241px;top:226px;width:1px;height:20px;background:#c6c6c6;"></div>
<div class="t" style="left:200.51px;top:231px;font-size:13.0px;color:#262626;transform:scaleX(0.9573);">C</div>
<div class="r" style="left:422px;top:226px;width:1px;height:20px;background:#c6c6c6;"></div>
<div class="t" style="left:327.01px;top:231px;font-size:13.0px;color:#222;transform:scaleX(0.9573);">D</div>
<div class="r" style="left:494px;top:226px;width:1px;height:20px;background:#c6c6c6;"></div>
<div class="t" style="left:453.85px;top:231px;font-size:13.0px;color:#222;transform:scaleX(0.9573);">E</div>
<div class="r" style="left:586px;top:226px;width:1px;height:20px;background:#c6c6c6;"></div>
<div class="t" style="left:536.20px;top:231px;font-size:13.0px;color:#222;transform:scaleX(0.9573);">F</div>
<div class="r" style="left:658px;top:226px;width:1px;height:20px;background:#c6c6c6;"></div>
<div class="t" style="left:617.16px;top:231px;font-size:13.0px;color:#222;transform:scaleX(0.9573);">G</div>
<div class="r" style="left:859px;top:226px;width:1px;height:20px;background:#c6c6c6;"></div>
<div class="t" style="left:754.01px;top:231px;font-size:13.0px;color:#222;transform:scaleX(0.9573);">H</div>
<div class="r" style="left:988px;top:226px;width:1px;height:20px;background:#c6c6c6;"></div>
<div class="t" style="left:921.77px;top:231px;font-size:13.0px;color:#222;transform:scaleX(0.9573);">I</div>
<div class="r" style="left:1180px;top:226px;width:1px;height:20px;background:#c6c6c6;"></div>
<div class="t" style="left:1080.89px;top:231px;font-size:13.0px;color:#222;transform:scaleX(0.9573);">J</div>
<div class="r" style="left:1252px;top:226px;width:1px;height:20px;background:#c6c6c6;"></div>
<div class="t" style="left:1211.85px;top:231px;font-size:13.0px;color:#222;transform:scaleX(0.9573);">K</div>
<div class="r" style="left:1324px;top:226px;width:1px;height:20px;background:#c6c6c6;"></div>
<div class="t" style="left:1284.54px;top:231px;font-size:13.0px;color:#222;transform:scaleX(0.9573);">L</div>
<div class="r" style="left:1396px;top:226px;width:1px;height:20px;background:#c6c6c6;"></div>
<div class="t" style="left:1354.82px;top:231px;font-size:13.0px;color:#222;transform:scaleX(0.9573);">M</div>
<div class="r" style="left:1468px;top:226px;width:1px;height:20px;background:#c6c6c6;"></div>
<div class="t" style="left:1427.51px;top:231px;font-size:13.0px;color:#222;transform:scaleX(0.9573);">N</div>
<div class="r" style="left:1540px;top:226px;width:1px;height:20px;background:#c6c6c6;"></div>
<div class="t" style="left:1499.16px;top:231px;font-size:13.0px;color:#222;transform:scaleX(0.9573);">O</div>
<div class="r" style="left:1612px;top:226px;width:1px;height:20px;background:#c6c6c6;"></div>
<div class="t" style="left:1571.85px;top:231px;font-size:13.0px;color:#222;transform:scaleX(0.9573);">P</div>
<div class="r" style="left:1671px;top:226px;width:1px;height:20px;background:#c6c6c6;"></div>
<div class="t" style="left:1636.66px;top:231px;font-size:13.0px;color:#222;transform:scaleX(0.9573);">Q</div>
<div class="r" style="left:1732px;top:226px;width:1px;height:20px;background:#c6c6c6;"></div>
<div class="t" style="left:1697.01px;top:231px;font-size:13.0px;color:#222;transform:scaleX(0.9573);">R</div>
<div class="r" style="left:1793px;top:226px;width:1px;height:20px;background:#c6c6c6;"></div>
<div class="t" style="left:1758.35px;top:231px;font-size:13.0px;color:#222;transform:scaleX(0.9573);">S</div>
<div class="r" style="left:1854px;top:226px;width:1px;height:20px;background:#c6c6c6;"></div>
<div class="t" style="left:1819.70px;top:231px;font-size:13.0px;color:#222;transform:scaleX(0.9573);">T</div>
<div class="r" style="left:1899px;top:226px;width:1px;height:20px;background:#c6c6c6;"></div>
<div class="t" style="left:1880.51px;top:231px;font-size:13.0px;color:#222;transform:scaleX(0.9573);">U</div>
<div class="r" style="left:25px;top:246px;width:1874px;height:736px;background:#808080;"></div>
<div class="r" style="left:0px;top:267px;width:25px;height:1px;background:#c6c6c6;"></div>
<div class="t" style="left:9.34px;top:250px;font-size:13.0px;color:#222;transform:scaleX(0.9573);">1</div>
<div class="r" style="left:0px;top:287px;width:25px;height:1px;background:#c6c6c6;"></div>
<div class="t" style="left:9.34px;top:270px;font-size:13.0px;color:#222;transform:scaleX(0.9573);">2</div>
<div class="r" style="left:0px;top:307px;width:25px;height:1px;background:#c6c6c6;"></div>
<div class="t" style="left:9.34px;top:290px;font-size:13.0px;color:#222;transform:scaleX(0.9573);">3</div>
<div class="r" style="left:0px;top:327px;width:25px;height:1px;background:#c6c6c6;"></div>
<div class="t" style="left:9.34px;top:310px;font-size:13.0px;color:#222;transform:scaleX(0.9573);">4</div>
<div class="r" style="left:0px;top:347px;width:25px;height:1px;background:#c6c6c6;"></div>
<div class="t" style="left:9.34px;top:330px;font-size:13.0px;color:#222;transform:scaleX(0.9573);">5</div>
<div class="r" style="left:0px;top:368px;width:25px;height:1px;background:#c6c6c6;"></div>
<div class="t" style="left:9.34px;top:351px;font-size:13.0px;color:#222;transform:scaleX(0.9573);">6</div>
<div class="r" style="left:0px;top:393px;width:25px;height:1px;background:#c6c6c6;"></div>
<div class="t" style="left:9.34px;top:376px;font-size:13.0px;color:#222;transform:scaleX(0.9573);">7</div>
<div class="r" style="left:0px;top:413px;width:25px;height:1px;background:#c6c6c6;"></div>
<div class="t" style="left:9.34px;top:396px;font-size:13.0px;color:#222;transform:scaleX(0.9573);">8</div>
<div class="r" style="left:0px;top:433px;width:25px;height:1px;background:#c6c6c6;"></div>
<div class="t" style="left:9.34px;top:416px;font-size:13.0px;color:#222;transform:scaleX(0.9573);">9</div>
<div class="r" style="left:0px;top:453px;width:25px;height:1px;background:#c6c6c6;"></div>
<div class="t" style="left:5.88px;top:436px;font-size:13.0px;color:#222;transform:scaleX(0.9573);">10</div>
<div class="r" style="left:0px;top:473px;width:25px;height:1px;background:#c6c6c6;"></div>
<div class="t" style="left:6.34px;top:456px;font-size:13.0px;color:#222;transform:scaleX(0.9573);">11</div>
<div class="r" style="left:0px;top:495px;width:25px;height:1px;background:#c6c6c6;"></div>
<div class="t" style="left:5.88px;top:479px;font-size:13.0px;color:#222;transform:scaleX(0.9573);">12</div>
<div class="r" style="left:0px;top:517px;width:25px;height:1px;background:#c6c6c6;"></div>
<div class="t" style="left:5.88px;top:501px;font-size:13.0px;color:#222;transform:scaleX(0.9573);">13</div>
<div class="r" style="left:0px;top:539px;width:25px;height:1px;background:#c6c6c6;"></div>
<div class="t" style="left:5.88px;top:523px;font-size:13.0px;color:#222;transform:scaleX(0.9573);">14</div>
<div class="r" style="left:0px;top:561px;width:25px;height:1px;background:#c6c6c6;"></div>
<div class="t" style="left:5.88px;top:545px;font-size:13.0px;color:#222;transform:scaleX(0.9573);">15</div>
<div class="r" style="left:0px;top:583px;width:25px;height:1px;background:#c6c6c6;"></div>
<div class="t" style="left:5.88px;top:567px;font-size:13.0px;color:#222;transform:scaleX(0.9573);">16</div>
<div class="r" style="left:0px;top:605px;width:25px;height:1px;background:#c6c6c6;"></div>
<div class="t" style="left:5.88px;top:589px;font-size:13.0px;color:#222;transform:scaleX(0.9573);">17</div>
<div class="r" style="left:0px;top:627px;width:25px;height:1px;background:#c6c6c6;"></div>
<div class="t" style="left:5.88px;top:611px;font-size:13.0px;color:#222;transform:scaleX(0.9573);">18</div>
<div class="r" style="left:0px;top:649px;width:25px;height:1px;background:#c6c6c6;"></div>
<div class="t" style="left:5.88px;top:633px;font-size:13.0px;color:#222;transform:scaleX(0.9573);">19</div>
<div class="r" style="left:0px;top:671px;width:25px;height:1px;background:#c6c6c6;"></div>
<div class="t" style="left:5.88px;top:655px;font-size:13.0px;color:#222;transform:scaleX(0.9573);">20</div>
<div class="r" style="left:0px;top:693px;width:25px;height:1px;background:#c6c6c6;"></div>
<div class="t" style="left:5.88px;top:677px;font-size:13.0px;color:#222;transform:scaleX(0.9573);">21</div>
<div class="r" style="left:0px;top:715px;width:25px;height:1px;background:#c6c6c6;"></div>
<div class="t" style="left:5.88px;top:699px;font-size:13.0px;color:#222;transform:scaleX(0.9573);">22</div>
<div class="r" style="left:0px;top:737px;width:25px;height:1px;background:#c6c6c6;"></div>
<div class="t" style="left:5.88px;top:721px;font-size:13.0px;color:#222;transform:scaleX(0.9573);">23</div>
<div class="r" style="left:0px;top:759px;width:25px;height:1px;background:#c6c6c6;"></div>
<div class="t" style="left:5.88px;top:743px;font-size:13.0px;color:#222;transform:scaleX(0.9573);">24</div>
<div class="r" style="left:0px;top:781px;width:25px;height:1px;background:#c6c6c6;"></div>
<div class="t" style="left:5.88px;top:765px;font-size:13.0px;color:#222;transform:scaleX(0.9573);">25</div>
<div class="r" style="left:0px;top:803px;width:25px;height:1px;background:#c6c6c6;"></div>
<div class="t" style="left:5.88px;top:787px;font-size:13.0px;color:#222;transform:scaleX(0.9573);">26</div>
<div class="r" style="left:0px;top:825px;width:25px;height:1px;background:#c6c6c6;"></div>
<div class="t" style="left:5.88px;top:809px;font-size:13.0px;color:#222;transform:scaleX(0.9573);">27</div>
<div class="r" style="left:0px;top:847px;width:25px;height:1px;background:#c6c6c6;"></div>
<div class="t" style="left:5.88px;top:831px;font-size:13.0px;color:#222;transform:scaleX(0.9573);">28</div>
<div class="r" style="left:0px;top:869px;width:25px;height:1px;background:#c6c6c6;"></div>
<div class="t" style="left:5.88px;top:853px;font-size:13.0px;color:#222;transform:scaleX(0.9573);">29</div>
<div class="r" style="left:0px;top:891px;width:25px;height:1px;background:#c6c6c6;"></div>
<div class="t" style="left:5.88px;top:875px;font-size:13.0px;color:#222;transform:scaleX(0.9573);">30</div>
<div class="r" style="left:0px;top:891px;width:25px;height:22px;background:#d2d2d2;"></div>
<div class="r" style="left:23px;top:891px;width:2px;height:22px;background:#217346;"></div>
<div class="r" style="left:0px;top:913px;width:25px;height:1px;background:#c6c6c6;"></div>
<div class="t" style="left:5.88px;top:897px;font-size:13.0px;color:#217346;transform:scaleX(0.9573);">31</div>
<div class="r" style="left:0px;top:935px;width:25px;height:1px;background:#c6c6c6;"></div>
<div class="t" style="left:5.88px;top:919px;font-size:13.0px;color:#222;transform:scaleX(0.9573);">32</div>
<div class="r" style="left:0px;top:957px;width:25px;height:1px;background:#c6c6c6;"></div>
<div class="t" style="left:5.88px;top:941px;font-size:13.0px;color:#222;transform:scaleX(0.9573);">33</div>
<div class="r" style="left:0px;top:979px;width:25px;height:1px;background:#c6c6c6;"></div>
<div class="t" style="left:5.88px;top:963px;font-size:13.0px;color:#222;transform:scaleX(0.9573);">34</div>
<div class="r" style="left:0px;top:982px;width:25px;height:1px;background:#c6c6c6;"></div>
<div class="r" style="left:96px;top:266px;width:327px;height:127px;background:#000000;"></div>
<div class="r" style="left:98px;top:268px;width:323px;height:99px;background:#404040;"></div>
<div class="r" style="left:98px;top:369px;width:323px;height:22px;background:#6666ff;"></div>
<div class="t" style="left:174.00px;top:272px;font-size:12.25px;color:#ffffff;font-weight:700;transform:scaleX(1.0245);">PT. KIKA TUMBUH BAHAGIA</div>
<div class="t" style="left:203.75px;top:292px;font-size:12.25px;color:#ffffff;font-weight:700;transform:scaleX(1.0299);">0286562426034000</div>
<div class="t" style="left:100.00px;top:312px;font-size:12.25px;color:#ffffff;font-weight:700;transform:scaleX(1.0234);">JALAN PESING POGLAR (POOL PPD) NO.8RT 005</div>
<div class="t" style="left:140.00px;top:352px;font-size:12.25px;color:#ffffff;font-weight:700;transform:scaleX(1.1156);">Tanggal Terdaftar 09 September 2024</div>
<div class="t" style="left:152.50px;top:372px;font-size:17.0px;color:#ffffff;font-weight:700;font-family:'Liberation Serif',serif;transform:scaleX(1.0147);">Daftar BP 21 Karyawan 2025</div>
<div class="r" style="left:97px;top:337px;width:28px;height:26px;background:#ffffff;"></div>
<svg class="r" style="left:98px;top:341px" width="12" height="13" viewBox="0 0 12 13"><rect x="0.5" y="0.5" width="10" height="11" fill="none" stroke="#b0b0b0" stroke-width="0.8"/><path d="M2 6l3 3.5L10 2" fill="none" stroke="#000" stroke-width="1.6"/></svg>
<svg class="r" style="left:98px;top:286px" width="6" height="6" viewBox="0 0 6 6"><path d="M0 0h5L0 5z" fill="#1a7a1a"/></svg>
<div class="t" style="left:778.75px;top:457px;font-size:13.75px;color:#ffffff;font-weight:700;font-family:'Liberation Serif',serif;transform:scaleX(1.1717);">59.764.286</div>
<div class="t" style="left:972.50px;top:457px;font-size:13.75px;color:#ffffff;font-weight:700;font-family:'Liberation Serif',serif;transform:scaleX(1.0909);">2</div>
<div class="t" style="left:1128.75px;top:457px;font-size:13.75px;color:#ffffff;font-weight:700;font-family:'Liberation Serif',serif;transform:scaleX(1.1570);">87.150</div>
<div class="r" style="left:25px;top:473px;width:1588px;height:1px;background:#000;"></div>
<div class="r" style="left:25px;top:474px;width:1587px;height:21px;background:#6666ff;"></div>
<div class="r" style="left:1612px;top:495px;width:287px;height:1px;background:#a6a6a6;"></div>
<div class="r" style="left:26px;top:474px;width:54px;height:21px;overflow:hidden"><div class="r" style="left:-26px;top:-474px;width:1920px;height:1080px"><div class="t" style="left:28.75px;top:478px;font-size:14.5px;color:#fff;transform:scaleX(0.9797);">Nama Objek Pajak</div></div></div>
<div class="r" style="left:98px;top:474px;width:54px;height:21px;overflow:hidden"><div class="r" style="left:-98px;top:-474px;width:1920px;height:1080px"><div class="t" style="left:100.60px;top:478px;font-size:14.5px;color:#fff;transform:scaleX(0.9683);">NO.</div></div></div>
<div class="r" style="left:170px;top:474px;width:54px;height:21px;overflow:hidden"><div class="r" style="left:-170px;top:-474px;width:1920px;height:1080px"><div class="t" style="left:172.50px;top:478px;font-size:14.5px;color:#fff;transform:scaleX(0.9755);">NIK/NPWP</div></div></div>
<div class="r" style="left:242px;top:474px;width:163px;height:21px;overflow:hidden"><div class="r" style="left:-242px;top:-474px;width:1920px;height:1080px"><div class="t" style="left:244.50px;top:478px;font-size:14.5px;color:#fff;transform:scaleX(1.0150);">NAMA</div></div></div>
<div class="r" style="left:423px;top:474px;width:54px;height:21px;overflow:hidden"><div class="r" style="left:-423px;top:-474px;width:1920px;height:1080px"><div class="t" style="left:425.50px;top:478px;font-size:14.5px;color:#fff;transform:scaleX(0.9443);">NOMOR BUKTI</div></div></div>
<div class="r" style="left:495px;top:474px;width:74px;height:21px;overflow:hidden"><div class="r" style="left:-495px;top:-474px;width:1920px;height:1080px"><div class="t" style="left:497.50px;top:478px;font-size:14.5px;color:#fff;transform:scaleX(0.9290);">TANGGAL BUKTI</div></div></div>
<div class="r" style="left:587px;top:474px;width:54px;height:21px;overflow:hidden"><div class="r" style="left:-587px;top:-474px;width:1920px;height:1080px"><div class="t" style="left:589.50px;top:478px;font-size:14.5px;color:#fff;transform:scaleX(0.8709);">KODE OBJEK</div></div></div>
<div class="r" style="left:659px;top:474px;width:183px;height:21px;overflow:hidden"><div class="r" style="left:-659px;top:-474px;width:1920px;height:1080px"><div class="t" style="left:666.25px;top:478px;font-size:14.5px;color:#fff;transform:scaleX(0.9137);">PENGHASILAN BRUTO (Rp)</div></div></div>
<div class="r" style="left:860px;top:474px;width:111px;height:21px;overflow:hidden"><div class="r" style="left:-860px;top:-474px;width:1920px;height:1080px"><div class="t" style="left:863.00px;top:478px;font-size:14.5px;color:#fff;transform:scaleX(0.9090);">TARIF PAJAK (%)</div></div></div>
<div class="r" style="left:989px;top:474px;width:174px;height:21px;overflow:hidden"><div class="r" style="left:-989px;top:-474px;width:1920px;height:1080px"><div class="t" style="left:996.25px;top:478px;font-size:14.5px;color:#fff;transform:scaleX(0.9099);">PAJAK PENGHASILAN (Rp)</div></div></div>
<div class="r" style="left:1181px;top:474px;width:54px;height:21px;overflow:hidden"><div class="r" style="left:-1181px;top:-474px;width:1920px;height:1080px"><div class="t" style="left:1183.75px;top:478px;font-size:14.5px;color:#fff;transform:scaleX(0.8940);">FASILITAS</div></div></div>
<div class="r" style="left:1253px;top:474px;width:54px;height:21px;overflow:hidden"><div class="r" style="left:-1253px;top:-474px;width:1920px;height:1080px"><div class="t" style="left:1255.50px;top:478px;font-size:14.5px;color:#fff;transform:scaleX(0.9053);">NEGARA</div></div></div>
<div class="r" style="left:1325px;top:474px;width:54px;height:21px;overflow:hidden"><div class="r" style="left:-1325px;top:-474px;width:1920px;height:1080px"><div class="t" style="left:1327.00px;top:478px;font-size:14.5px;color:#fff;transform:scaleX(0.9470);">ID TEMPAT USAHA</div></div></div>
<div class="r" style="left:1397px;top:474px;width:54px;height:21px;overflow:hidden"><div class="r" style="left:-1397px;top:-474px;width:1920px;height:1080px"><div class="t" style="left:1399.70px;top:478px;font-size:14.5px;color:#fff;transform:scaleX(0.8521);">KAP-KJS</div></div></div>
<div class="r" style="left:1469px;top:474px;width:54px;height:21px;overflow:hidden"><div class="r" style="left:-1469px;top:-474px;width:1920px;height:1080px"><div class="t" style="left:1471.60px;top:478px;font-size:14.5px;color:#fff;transform:scaleX(0.9050);">STATUS</div></div></div>
<div class="r" style="left:1541px;top:474px;width:54px;height:21px;overflow:hidden"><div class="r" style="left:-1541px;top:-474px;width:1920px;height:1080px"><div class="t" style="left:1543.40px;top:478px;font-size:14.5px;color:#fff;transform:scaleX(0.9624);">MASA</div></div></div>
<div class="r" style="left:97px;top:474px;width:1px;height:21px;background:#000;"></div>
<div class="r" style="left:80px;top:478px;width:16px;height:16px;background:#f4f4f4;box-shadow:inset 0 0 0 1px #dadada"></div>
<svg class="r" style="left:84px;top:484px" width="9" height="5" viewBox="0 0 9 5"><path d="M0 0h8.5L4.25 4.5z" fill="#595959"/></svg>
<div class="r" style="left:169px;top:474px;width:1px;height:21px;background:#000;"></div>
<div class="r" style="left:152px;top:478px;width:16px;height:16px;background:#f4f4f4;box-shadow:inset 0 0 0 1px #dadada"></div>
<svg class="r" style="left:156px;top:484px" width="9" height="5" viewBox="0 0 9 5"><path d="M0 0h8.5L4.25 4.5z" fill="#595959"/></svg>
<div class="r" style="left:241px;top:474px;width:1px;height:21px;background:#000;"></div>
<div class="r" style="left:224px;top:478px;width:16px;height:16px;background:#f4f4f4;box-shadow:inset 0 0 0 1px #dadada"></div>
<svg class="r" style="left:228px;top:484px" width="9" height="5" viewBox="0 0 9 5"><path d="M0 0h8.5L4.25 4.5z" fill="#595959"/></svg>
<div class="r" style="left:422px;top:474px;width:1px;height:21px;background:#000;"></div>
<div class="r" style="left:405px;top:478px;width:16px;height:16px;background:#f4f4f4;box-shadow:inset 0 0 0 1px #dadada"></div>
<svg class="r" style="left:409px;top:484px" width="9" height="5" viewBox="0 0 9 5"><path d="M0 0h8.5L4.25 4.5z" fill="#595959"/></svg>
<div class="r" style="left:494px;top:474px;width:1px;height:21px;background:#000;"></div>
<div class="r" style="left:477px;top:478px;width:16px;height:16px;background:#f4f4f4;box-shadow:inset 0 0 0 1px #dadada"></div>
<svg class="r" style="left:481px;top:484px" width="9" height="5" viewBox="0 0 9 5"><path d="M0 0h8.5L4.25 4.5z" fill="#595959"/></svg>
<div class="r" style="left:586px;top:474px;width:1px;height:21px;background:#000;"></div>
<div class="r" style="left:569px;top:478px;width:16px;height:16px;background:#f4f4f4;box-shadow:inset 0 0 0 1px #dadada"></div>
<svg class="r" style="left:573px;top:484px" width="9" height="5" viewBox="0 0 9 5"><path d="M0 0h8.5L4.25 4.5z" fill="#595959"/></svg>
<div class="r" style="left:658px;top:474px;width:1px;height:21px;background:#000;"></div>
<div class="r" style="left:641px;top:478px;width:16px;height:16px;background:#f4f4f4;box-shadow:inset 0 0 0 1px #dadada"></div>
<svg class="r" style="left:645px;top:484px" width="9" height="5" viewBox="0 0 9 5"><path d="M0 0h8.5L4.25 4.5z" fill="#595959"/></svg>
<div class="r" style="left:859px;top:474px;width:1px;height:21px;background:#000;"></div>
<div class="r" style="left:842px;top:478px;width:16px;height:16px;background:#f4f4f4;box-shadow:inset 0 0 0 1px #dadada"></div>
<svg class="r" style="left:846px;top:484px" width="9" height="5" viewBox="0 0 9 5"><path d="M0 0h8.5L4.25 4.5z" fill="#595959"/></svg>
<div class="r" style="left:988px;top:474px;width:1px;height:21px;background:#000;"></div>
<div class="r" style="left:971px;top:478px;width:16px;height:16px;background:#f4f4f4;box-shadow:inset 0 0 0 1px #dadada"></div>
<svg class="r" style="left:975px;top:484px" width="9" height="5" viewBox="0 0 9 5"><path d="M0 0h8.5L4.25 4.5z" fill="#595959"/></svg>
<div class="r" style="left:1180px;top:474px;width:1px;height:21px;background:#000;"></div>
<div class="r" style="left:1163px;top:478px;width:16px;height:16px;background:#f4f4f4;box-shadow:inset 0 0 0 1px #dadada"></div>
<svg class="r" style="left:1167px;top:484px" width="9" height="5" viewBox="0 0 9 5"><path d="M0 0h8.5L4.25 4.5z" fill="#595959"/></svg>
<div class="r" style="left:1252px;top:474px;width:1px;height:21px;background:#000;"></div>
<div class="r" style="left:1235px;top:478px;width:16px;height:16px;background:#f4f4f4;box-shadow:inset 0 0 0 1px #dadada"></div>
<svg class="r" style="left:1239px;top:484px" width="9" height="5" viewBox="0 0 9 5"><path d="M0 0h8.5L4.25 4.5z" fill="#595959"/></svg>
<div class="r" style="left:1324px;top:474px;width:1px;height:21px;background:#000;"></div>
<div class="r" style="left:1307px;top:478px;width:16px;height:16px;background:#f4f4f4;box-shadow:inset 0 0 0 1px #dadada"></div>
<svg class="r" style="left:1311px;top:484px" width="9" height="5" viewBox="0 0 9 5"><path d="M0 0h8.5L4.25 4.5z" fill="#595959"/></svg>
<div class="r" style="left:1396px;top:474px;width:1px;height:21px;background:#000;"></div>
<div class="r" style="left:1379px;top:478px;width:16px;height:16px;background:#f4f4f4;box-shadow:inset 0 0 0 1px #dadada"></div>
<svg class="r" style="left:1383px;top:484px" width="9" height="5" viewBox="0 0 9 5"><path d="M0 0h8.5L4.25 4.5z" fill="#595959"/></svg>
<div class="r" style="left:1468px;top:474px;width:1px;height:21px;background:#000;"></div>
<div class="r" style="left:1451px;top:478px;width:16px;height:16px;background:#f4f4f4;box-shadow:inset 0 0 0 1px #dadada"></div>
<svg class="r" style="left:1455px;top:484px" width="9" height="5" viewBox="0 0 9 5"><path d="M0 0h8.5L4.25 4.5z" fill="#595959"/></svg>
<div class="r" style="left:1540px;top:474px;width:1px;height:21px;background:#000;"></div>
<div class="r" style="left:1523px;top:478px;width:16px;height:16px;background:#f4f4f4;box-shadow:inset 0 0 0 1px #dadada"></div>
<svg class="r" style="left:1527px;top:484px" width="9" height="5" viewBox="0 0 9 5"><path d="M0 0h8.5L4.25 4.5z" fill="#595959"/></svg>
<div class="r" style="left:1612px;top:474px;width:1px;height:21px;background:#000;"></div>
<div class="r" style="left:1596px;top:478px;width:16px;height:16px;background:#f4f4f4;box-shadow:inset 0 0 0 1px #dadada"></div>
<svg class="r" style="left:1600px;top:484px" width="9" height="5" viewBox="0 0 9 5"><path d="M0 0h8.5L4.25 4.5z" fill="#595959"/></svg>
<div class="r" style="left:1654px;top:478px;width:16px;height:16px;background:#f4f4f4;box-shadow:inset 0 0 0 1px #dadada"></div>
<svg class="r" style="left:1658px;top:484px" width="9" height="5" viewBox="0 0 9 5"><path d="M0 0h8.5L4.25 4.5z" fill="#595959"/></svg>
<div class="r" style="left:1715px;top:478px;width:16px;height:16px;background:#f4f4f4;box-shadow:inset 0 0 0 1px #dadada"></div>
<svg class="r" style="left:1719px;top:484px" width="9" height="5" viewBox="0 0 9 5"><path d="M0 0h8.5L4.25 4.5z" fill="#595959"/></svg>
<div class="r" style="left:1776px;top:478px;width:16px;height:16px;background:#f4f4f4;box-shadow:inset 0 0 0 1px #dadada"></div>
<svg class="r" style="left:1780px;top:484px" width="9" height="5" viewBox="0 0 9 5"><path d="M0 0h8.5L4.25 4.5z" fill="#595959"/></svg>
<div class="r" style="left:1838px;top:478px;width:16px;height:16px;background:#f4f4f4;box-shadow:inset 0 0 0 1px #dadada"></div>
<svg class="r" style="left:1842px;top:484px" width="9" height="5" viewBox="0 0 9 5"><path d="M0 0h8.5L4.25 4.5z" fill="#595959"/></svg>
<div class="r" style="left:25px;top:474px;width:1px;height:21px;background:#000;"></div>
<div class="r" style="left:25px;top:495px;width:144px;height:22px;overflow:hidden"><div class="r" style="left:-25px;top:-495px;width:1920px;height:1080px"><div class="t" style="left:28.75px;top:501px;font-size:13.75px;color:#fff;font-weight:700;font-family:'Liberation Serif',serif;transform:scaleX(1.0487);">Penghasilan yang diterima</div></div></div>
<div class="t" style="left:177.99px;top:500px;font-size:14.5px;color:#fff;transform:scaleX(0.9652);">3,28E+15</div>
<div class="r" style="left:242px;top:495px;width:180px;height:22px;overflow:hidden"><div class="r" style="left:-242px;top:-495px;width:1920px;height:1080px"><div class="t" style="left:244.90px;top:500px;font-size:14.5px;color:#fff;transform:scaleX(0.9305);">REZA AKMAL ZAHRAN</div></div></div>
<div class="r" style="left:423px;top:495px;width:71px;height:22px;overflow:hidden"><div class="r" style="left:-423px;top:-495px;width:1920px;height:1080px"><div class="t" style="left:425.50px;top:500px;font-size:14.5px;color:#fff;transform:scaleX(0.9282);">2504Y91Y8XXX</div></div></div>
<div class="t" style="left:506.52px;top:500px;font-size:14.5px;color:#fff;transform:scaleX(1.0644);">15/09/2025</div>
<div class="t" style="left:589.50px;top:500px;font-size:14.5px;color:#fff;transform:scaleX(1.0070);">21-100-01</div>
<div class="t" style="left:787.16px;top:500px;font-size:14.5px;color:#fff;transform:scaleX(1.0053);">1.300.000</div>
<div class="t" style="left:977.89px;top:500px;font-size:14.5px;color:#fff;transform:scaleX(1.0057);">0</div>
<div class="t" style="left:1169.39px;top:500px;font-size:14.5px;color:#fff;transform:scaleX(1.0057);">0</div>
<div class="r" style="left:1181px;top:495px;width:72px;height:22px;overflow:hidden"><div class="r" style="left:-1181px;top:-495px;width:1920px;height:1080px"><div class="t" style="left:1184.25px;top:500px;font-size:14.5px;color:#fff;transform:scaleX(0.9836);">Tanpa Fasilitas</div></div></div>
<div class="t" style="left:1255.50px;top:500px;font-size:14.5px;color:#fff;transform:scaleX(1.0058);">Indonesia</div>
<div class="t" style="left:1333.69px;top:500px;font-size:14.5px;color:#fff;transform:scaleX(0.9652);">2,87E+20</div>
<div class="r" style="left:1397px;top:495px;width:71px;height:22px;overflow:hidden"><div class="r" style="left:-1397px;top:-495px;width:1920px;height:1080px"><div class="t" style="left:1398.75px;top:500px;font-size:14.5px;color:#fff;transform:scaleX(1.0350);">411121-100</div></div></div>
<div class="t" style="left:1471.60px;top:500px;font-size:14.5px;color:#fff;transform:scaleX(1.0371);">Normal</div>
<div class="t" style="left:1601.89px;top:500px;font-size:14.5px;color:#fff;font-weight:700;transform:scaleX(1.0057);">8</div>
<div class="r" style="left:25px;top:517px;width:144px;height:22px;overflow:hidden"><div class="r" style="left:-25px;top:-517px;width:1920px;height:1080px"><div class="t" style="left:28.75px;top:523px;font-size:13.75px;color:#fff;font-weight:700;font-family:'Liberation Serif',serif;transform:scaleX(1.0487);">Penghasilan yang diterima</div></div></div>
<div class="t" style="left:177.99px;top:522px;font-size:14.5px;color:#fff;transform:scaleX(0.9652);">3,28E+15</div>
<div class="r" style="left:242px;top:517px;width:180px;height:22px;overflow:hidden"><div class="r" style="left:-242px;top:-517px;width:1920px;height:1080px"><div class="t" style="left:244.90px;top:522px;font-size:14.5px;color:#fff;transform:scaleX(0.9305);">REZA AKMAL ZAHRAN</div></div></div>
<div class="r" style="left:423px;top:517px;width:71px;height:22px;overflow:hidden"><div class="r" style="left:-423px;top:-517px;width:1920px;height:1080px"><div class="t" style="left:425.50px;top:522px;font-size:14.5px;color:#fff;transform:scaleX(0.9185);">2505KHPKIXXX</div></div></div>
<div class="t" style="left:506.52px;top:522px;font-size:14.5px;color:#fff;transform:scaleX(1.0644);">08/10/2025</div>
<div class="t" style="left:589.50px;top:522px;font-size:14.5px;color:#fff;transform:scaleX(1.0070);">21-100-01</div>
<div class="t" style="left:787.16px;top:522px;font-size:14.5px;color:#fff;transform:scaleX(1.0053);">5.100.000</div>
<div class="t" style="left:977.89px;top:522px;font-size:14.5px;color:#fff;transform:scaleX(1.0057);">0</div>
<div class="t" style="left:1169.39px;top:522px;font-size:14.5px;color:#fff;transform:scaleX(1.0057);">0</div>
<div class="r" style="left:1181px;top:517px;width:72px;height:22px;overflow:hidden"><div class="r" style="left:-1181px;top:-517px;width:1920px;height:1080px"><div class="t" style="left:1184.25px;top:522px;font-size:14.5px;color:#fff;transform:scaleX(0.9836);">Tanpa Fasilitas</div></div></div>
<div class="t" style="left:1255.50px;top:522px;font-size:14.5px;color:#fff;transform:scaleX(1.0058);">Indonesia</div>
<div class="t" style="left:1333.69px;top:522px;font-size:14.5px;color:#fff;transform:scaleX(0.9652);">2,87E+20</div>
<div class="r" style="left:1397px;top:517px;width:71px;height:22px;overflow:hidden"><div class="r" style="left:-1397px;top:-517px;width:1920px;height:1080px"><div class="t" style="left:1398.75px;top:522px;font-size:14.5px;color:#fff;transform:scaleX(1.0350);">411121-100</div></div></div>
<div class="t" style="left:1471.60px;top:522px;font-size:14.5px;color:#fff;transform:scaleX(1.0371);">Normal</div>
<div class="t" style="left:1601.89px;top:522px;font-size:14.5px;color:#fff;font-weight:700;transform:scaleX(1.0057);">9</div>
<div class="r" style="left:25px;top:539px;width:144px;height:22px;overflow:hidden"><div class="r" style="left:-25px;top:-539px;width:1920px;height:1080px"><div class="t" style="left:28.75px;top:545px;font-size:13.75px;color:#fff;font-weight:700;font-family:'Liberation Serif',serif;transform:scaleX(1.0487);">Penghasilan yang diterima</div></div></div>
<div class="t" style="left:177.99px;top:544px;font-size:14.5px;color:#fff;transform:scaleX(0.9652);">3,18E+15</div>
<div class="r" style="left:242px;top:539px;width:180px;height:22px;overflow:hidden"><div class="r" style="left:-242px;top:-539px;width:1920px;height:1080px"><div class="t" style="left:244.90px;top:544px;font-size:14.5px;color:#fff;transform:scaleX(0.9154);">VERONICA KIDUNG LARASATI</div></div></div>
<div class="r" style="left:423px;top:539px;width:71px;height:22px;overflow:hidden"><div class="r" style="left:-423px;top:-539px;width:1920px;height:1080px"><div class="t" style="left:425.50px;top:544px;font-size:14.5px;color:#fff;transform:scaleX(0.9186);">2505KHPHXXXX</div></div></div>
<div class="t" style="left:506.52px;top:544px;font-size:14.5px;color:#fff;transform:scaleX(1.0644);">08/10/2025</div>
<div class="t" style="left:589.50px;top:544px;font-size:14.5px;color:#fff;transform:scaleX(1.0070);">21-100-01</div>
<div class="t" style="left:787.16px;top:544px;font-size:14.5px;color:#fff;transform:scaleX(1.0053);">2.880.000</div>
<div class="t" style="left:977.89px;top:544px;font-size:14.5px;color:#fff;transform:scaleX(1.0057);">0</div>
<div class="t" style="left:1169.39px;top:544px;font-size:14.5px;color:#fff;transform:scaleX(1.0057);">0</div>
<div class="r" style="left:1181px;top:539px;width:72px;height:22px;overflow:hidden"><div class="r" style="left:-1181px;top:-539px;width:1920px;height:1080px"><div class="t" style="left:1184.25px;top:544px;font-size:14.5px;color:#fff;transform:scaleX(0.9836);">Tanpa Fasilitas</div></div></div>
<div class="t" style="left:1255.50px;top:544px;font-size:14.5px;color:#fff;transform:scaleX(1.0058);">Indonesia</div>
<div class="t" style="left:1333.69px;top:544px;font-size:14.5px;color:#fff;transform:scaleX(0.9652);">2,87E+20</div>
<div class="r" style="left:1397px;top:539px;width:71px;height:22px;overflow:hidden"><div class="r" style="left:-1397px;top:-539px;width:1920px;height:1080px"><div class="t" style="left:1398.75px;top:544px;font-size:14.5px;color:#fff;transform:scaleX(1.0350);">411121-100</div></div></div>
<div class="t" style="left:1471.60px;top:544px;font-size:14.5px;color:#fff;transform:scaleX(1.0371);">Normal</div>
<div class="t" style="left:1601.89px;top:544px;font-size:14.5px;color:#fff;font-weight:700;transform:scaleX(1.0057);">9</div>
<div class="r" style="left:25px;top:561px;width:144px;height:22px;overflow:hidden"><div class="r" style="left:-25px;top:-561px;width:1920px;height:1080px"><div class="t" style="left:28.75px;top:567px;font-size:13.75px;color:#fff;font-weight:700;font-family:'Liberation Serif',serif;transform:scaleX(1.0487);">Penghasilan yang diterima</div></div></div>
<div class="t" style="left:177.99px;top:566px;font-size:14.5px;color:#fff;transform:scaleX(0.9652);">3,18E+15</div>
<div class="r" style="left:242px;top:561px;width:180px;height:22px;overflow:hidden"><div class="r" style="left:-242px;top:-561px;width:1920px;height:1080px"><div class="t" style="left:244.90px;top:566px;font-size:14.5px;color:#fff;transform:scaleX(0.9154);">VERONICA KIDUNG LARASATI</div></div></div>
<div class="r" style="left:423px;top:561px;width:71px;height:22px;overflow:hidden"><div class="r" style="left:-423px;top:-561px;width:1920px;height:1080px"><div class="t" style="left:425.50px;top:566px;font-size:14.5px;color:#fff;transform:scaleX(0.9401);">2506AIQL4XXX</div></div></div>
<div class="t" style="left:506.52px;top:566px;font-size:14.5px;color:#fff;transform:scaleX(1.0804);">10/11/2025</div>
<div class="t" style="left:589.50px;top:566px;font-size:14.5px;color:#fff;transform:scaleX(1.0070);">21-100-01</div>
<div class="t" style="left:787.16px;top:566px;font-size:14.5px;color:#fff;transform:scaleX(1.0053);">4.000.000</div>
<div class="t" style="left:977.89px;top:566px;font-size:14.5px;color:#fff;transform:scaleX(1.0057);">0</div>
<div class="t" style="left:1169.39px;top:566px;font-size:14.5px;color:#fff;transform:scaleX(1.0057);">0</div>
<div class="r" style="left:1181px;top:561px;width:72px;height:22px;overflow:hidden"><div class="r" style="left:-1181px;top:-561px;width:1920px;height:1080px"><div class="t" style="left:1184.25px;top:566px;font-size:14.5px;color:#fff;transform:scaleX(0.9836);">Tanpa Fasilitas</div></div></div>
<div class="t" style="left:1255.50px;top:566px;font-size:14.5px;color:#fff;transform:scaleX(1.0058);">Indonesia</div>
<div class="t" style="left:1333.69px;top:566px;font-size:14.5px;color:#fff;transform:scaleX(0.9652);">2,87E+20</div>
<div class="r" style="left:1397px;top:561px;width:71px;height:22px;overflow:hidden"><div class="r" style="left:-1397px;top:-561px;width:1920px;height:1080px"><div class="t" style="left:1398.75px;top:566px;font-size:14.5px;color:#fff;transform:scaleX(1.0350);">411121-100</div></div></div>
<div class="t" style="left:1471.60px;top:566px;font-size:14.5px;color:#fff;transform:scaleX(1.0371);">Normal</div>
<div class="t" style="left:1593.78px;top:566px;font-size:14.5px;color:#fff;font-weight:700;transform:scaleX(1.0057);">10</div>
<div class="r" style="left:25px;top:583px;width:144px;height:22px;overflow:hidden"><div class="r" style="left:-25px;top:-583px;width:1920px;height:1080px"><div class="t" style="left:28.75px;top:589px;font-size:13.75px;color:#fff;font-weight:700;font-family:'Liberation Serif',serif;transform:scaleX(1.0487);">Penghasilan yang diterima</div></div></div>
<div class="t" style="left:177.99px;top:588px;font-size:14.5px;color:#fff;transform:scaleX(0.9652);">3,28E+15</div>
<div class="r" style="left:242px;top:583px;width:180px;height:22px;overflow:hidden"><div class="r" style="left:-242px;top:-583px;width:1920px;height:1080px"><div class="t" style="left:244.90px;top:588px;font-size:14.5px;color:#fff;transform:scaleX(0.9305);">REZA AKMAL ZAHRAN</div></div></div>
<div class="r" style="left:423px;top:583px;width:71px;height:22px;overflow:hidden"><div class="r" style="left:-423px;top:-583px;width:1920px;height:1080px"><div class="t" style="left:425.50px;top:588px;font-size:14.5px;color:#fff;transform:scaleX(0.9407);">2506AIR16XXX</div></div></div>
<div class="t" style="left:497.50px;top:588px;font-size:14.5px;color:#fff;transform:scaleX(1.0804);">10/11/2025</div>
<div class="t" style="left:589.50px;top:588px;font-size:14.5px;color:#fff;transform:scaleX(1.0070);">21-100-01</div>
<div class="t" style="left:787.16px;top:588px;font-size:14.5px;color:#fff;transform:scaleX(1.0053);">5.680.000</div>
<div class="t" style="left:965.79px;top:588px;font-size:14.5px;color:#fff;">0,5</div>
<div class="t" style="left:1132.91px;top:588px;font-size:14.5px;color:#fff;transform:scaleX(1.0054);">28.400</div>
<div class="r" style="left:1181px;top:583px;width:72px;height:22px;overflow:hidden"><div class="r" style="left:-1181px;top:-583px;width:1920px;height:1080px"><div class="t" style="left:1184.25px;top:588px;font-size:14.5px;color:#fff;transform:scaleX(0.9836);">Tanpa Fasilitas</div></div></div>
<div class="t" style="left:1255.50px;top:588px;font-size:14.5px;color:#fff;transform:scaleX(1.0058);">Indonesia</div>
<div class="t" style="left:1333.69px;top:588px;font-size:14.5px;color:#fff;transform:scaleX(0.9652);">2,87E+20</div>
<div class="r" style="left:1397px;top:583px;width:71px;height:22px;overflow:hidden"><div class="r" style="left:-1397px;top:-583px;width:1920px;height:1080px"><div class="t" style="left:1398.75px;top:588px;font-size:14.5px;color:#fff;transform:scaleX(1.0350);">411121-100</div></div></div>
<div class="t" style="left:1471.60px;top:588px;font-size:14.5px;color:#fff;transform:scaleX(1.0371);">Normal</div>
<div class="t" style="left:1593.78px;top:588px;font-size:14.5px;color:#fff;font-weight:700;transform:scaleX(1.0057);">10</div>
<div class="r" style="left:25px;top:605px;width:144px;height:22px;overflow:hidden"><div class="r" style="left:-25px;top:-605px;width:1920px;height:1080px"><div class="t" style="left:28.75px;top:611px;font-size:13.75px;color:#fff;font-weight:700;font-family:'Liberation Serif',serif;transform:scaleX(1.0487);">Penghasilan yang diterima</div></div></div>
<div class="t" style="left:177.99px;top:610px;font-size:14.5px;color:#fff;transform:scaleX(0.9652);">9,99E+15</div>
<div class="r" style="left:242px;top:605px;width:180px;height:22px;overflow:hidden"><div class="r" style="left:-242px;top:-605px;width:1920px;height:1080px"><div class="t" style="left:244.90px;top:610px;font-size:14.5px;color:#fff;transform:scaleX(0.9231);">PENERIMA PENGHASILAN#3</div></div></div>
<div class="r" style="left:423px;top:605px;width:71px;height:22px;overflow:hidden"><div class="r" style="left:-423px;top:-605px;width:1920px;height:1080px"><div class="t" style="left:425.50px;top:610px;font-size:14.5px;color:#fff;transform:scaleX(0.9536);">2506AIQ68XXX</div></div></div>
<div class="t" style="left:497.50px;top:610px;font-size:14.5px;color:#fff;transform:scaleX(1.0804);">10/11/2025</div>
<div class="t" style="left:589.50px;top:610px;font-size:14.5px;color:#fff;transform:scaleX(1.0070);">21-100-01</div>
<div class="t" style="left:787.16px;top:610px;font-size:14.5px;color:#fff;transform:scaleX(1.0053);">1.540.000</div>
<div class="t" style="left:977.89px;top:610px;font-size:14.5px;color:#fff;transform:scaleX(1.0057);">0</div>
<div class="t" style="left:1169.39px;top:610px;font-size:14.5px;color:#fff;transform:scaleX(1.0057);">0</div>
<div class="r" style="left:1181px;top:605px;width:72px;height:22px;overflow:hidden"><div class="r" style="left:-1181px;top:-605px;width:1920px;height:1080px"><div class="t" style="left:1184.25px;top:610px;font-size:14.5px;color:#fff;transform:scaleX(0.9836);">Tanpa Fasilitas</div></div></div>
<div class="t" style="left:1255.50px;top:610px;font-size:14.5px;color:#fff;transform:scaleX(1.0058);">Indonesia</div>
<div class="t" style="left:1333.69px;top:610px;font-size:14.5px;color:#fff;transform:scaleX(0.9652);">2,87E+20</div>
<div class="r" style="left:1397px;top:605px;width:71px;height:22px;overflow:hidden"><div class="r" style="left:-1397px;top:-605px;width:1920px;height:1080px"><div class="t" style="left:1398.75px;top:610px;font-size:14.5px;color:#fff;transform:scaleX(1.0350);">411121-100</div></div></div>
<div class="t" style="left:1471.60px;top:610px;font-size:14.5px;color:#fff;transform:scaleX(1.0371);">Normal</div>
<div class="t" style="left:1593.78px;top:610px;font-size:14.5px;color:#fff;font-weight:700;transform:scaleX(1.0057);">10</div>
<div class="r" style="left:25px;top:627px;width:144px;height:22px;overflow:hidden"><div class="r" style="left:-25px;top:-627px;width:1920px;height:1080px"><div class="t" style="left:28.75px;top:633px;font-size:13.75px;color:#fff;font-weight:700;font-family:'Liberation Serif',serif;transform:scaleX(1.0487);">Penghasilan yang diterima</div></div></div>
<div class="t" style="left:177.99px;top:632px;font-size:14.5px;color:#fff;transform:scaleX(0.9652);">3,18E+15</div>
<div class="r" style="left:242px;top:627px;width:180px;height:22px;overflow:hidden"><div class="r" style="left:-242px;top:-627px;width:1920px;height:1080px"><div class="t" style="left:244.90px;top:632px;font-size:14.5px;color:#fff;transform:scaleX(0.9154);">VERONICA KIDUNG LARASATI</div></div></div>
<div class="r" style="left:423px;top:627px;width:71px;height:22px;overflow:hidden"><div class="r" style="left:-423px;top:-627px;width:1920px;height:1080px"><div class="t" style="left:425.50px;top:632px;font-size:14.5px;color:#fff;transform:scaleX(0.9488);">250720F08XXX</div></div></div>
<div class="t" style="left:497.50px;top:632px;font-size:14.5px;color:#fff;transform:scaleX(1.0644);">08/12/2025</div>
<div class="t" style="left:589.50px;top:632px;font-size:14.5px;color:#fff;transform:scaleX(1.0070);">21-100-01</div>
<div class="t" style="left:787.16px;top:632px;font-size:14.5px;color:#fff;transform:scaleX(1.0053);">3.500.000</div>
<div class="t" style="left:977.89px;top:632px;font-size:14.5px;color:#fff;transform:scaleX(1.0057);">0</div>
<div class="t" style="left:1169.39px;top:632px;font-size:14.5px;color:#fff;transform:scaleX(1.0057);">0</div>
<div class="r" style="left:1181px;top:627px;width:72px;height:22px;overflow:hidden"><div class="r" style="left:-1181px;top:-627px;width:1920px;height:1080px"><div class="t" style="left:1184.25px;top:632px;font-size:14.5px;color:#fff;transform:scaleX(0.9836);">Tanpa Fasilitas</div></div></div>
<div class="t" style="left:1255.50px;top:632px;font-size:14.5px;color:#fff;transform:scaleX(1.0058);">Indonesia</div>
<div class="t" style="left:1333.69px;top:632px;font-size:14.5px;color:#fff;transform:scaleX(0.9652);">2,87E+20</div>
<div class="r" style="left:1397px;top:627px;width:71px;height:22px;overflow:hidden"><div class="r" style="left:-1397px;top:-627px;width:1920px;height:1080px"><div class="t" style="left:1398.75px;top:632px;font-size:14.5px;color:#fff;transform:scaleX(1.0350);">411121-100</div></div></div>
<div class="t" style="left:1471.60px;top:632px;font-size:14.5px;color:#fff;transform:scaleX(1.0371);">Normal</div>
<div class="t" style="left:1593.78px;top:632px;font-size:14.5px;color:#fff;font-weight:700;transform:scaleX(1.0582);">11</div>
<div class="r" style="left:25px;top:649px;width:144px;height:22px;overflow:hidden"><div class="r" style="left:-25px;top:-649px;width:1920px;height:1080px"><div class="t" style="left:28.75px;top:655px;font-size:13.75px;color:#fff;font-weight:700;font-family:'Liberation Serif',serif;transform:scaleX(1.0487);">Penghasilan yang diterima</div></div></div>
<div class="t" style="left:177.99px;top:654px;font-size:14.5px;color:#fff;transform:scaleX(0.9652);">3,28E+15</div>
<div class="r" style="left:242px;top:649px;width:180px;height:22px;overflow:hidden"><div class="r" style="left:-242px;top:-649px;width:1920px;height:1080px"><div class="t" style="left:244.90px;top:654px;font-size:14.5px;color:#fff;transform:scaleX(0.9305);">REZA AKMAL ZAHRAN</div></div></div>
<div class="r" style="left:423px;top:649px;width:71px;height:22px;overflow:hidden"><div class="r" style="left:-423px;top:-649px;width:1920px;height:1080px"><div class="t" style="left:425.50px;top:654px;font-size:14.5px;color:#fff;transform:scaleX(0.9476);">250720F0UXXX</div></div></div>
<div class="t" style="left:497.50px;top:654px;font-size:14.5px;color:#fff;transform:scaleX(1.0644);">08/12/2025</div>
<div class="t" style="left:589.50px;top:654px;font-size:14.5px;color:#fff;transform:scaleX(1.0070);">21-100-01</div>
<div class="t" style="left:787.16px;top:654px;font-size:14.5px;color:#fff;transform:scaleX(1.0053);">6.000.000</div>
<div class="t" style="left:957.68px;top:654px;font-size:14.5px;color:#fff;">0,75</div>
<div class="t" style="left:1132.91px;top:654px;font-size:14.5px;color:#fff;transform:scaleX(1.0054);">45.000</div>
<div class="r" style="left:1181px;top:649px;width:72px;height:22px;overflow:hidden"><div class="r" style="left:-1181px;top:-649px;width:1920px;height:1080px"><div class="t" style="left:1184.25px;top:654px;font-size:14.5px;color:#fff;transform:scaleX(0.9836);">Tanpa Fasilitas</div></div></div>
<div class="t" style="left:1255.50px;top:654px;font-size:14.5px;color:#fff;transform:scaleX(1.0058);">Indonesia</div>
<div class="t" style="left:1333.69px;top:654px;font-size:14.5px;color:#fff;transform:scaleX(0.9652);">2,87E+20</div>
<div class="r" style="left:1397px;top:649px;width:71px;height:22px;overflow:hidden"><div class="r" style="left:-1397px;top:-649px;width:1920px;height:1080px"><div class="t" style="left:1398.75px;top:654px;font-size:14.5px;color:#fff;transform:scaleX(1.0350);">411121-100</div></div></div>
<div class="t" style="left:1471.60px;top:654px;font-size:14.5px;color:#fff;transform:scaleX(1.0371);">Normal</div>
<div class="t" style="left:1593.78px;top:654px;font-size:14.5px;color:#fff;font-weight:700;transform:scaleX(1.0582);">11</div>
<div class="r" style="left:25px;top:671px;width:144px;height:22px;overflow:hidden"><div class="r" style="left:-25px;top:-671px;width:1920px;height:1080px"><div class="t" style="left:28.75px;top:677px;font-size:13.75px;color:#fff;font-weight:700;font-family:'Liberation Serif',serif;transform:scaleX(1.0487);">Penghasilan yang diterima</div></div></div>
<div class="t" style="left:177.99px;top:676px;font-size:14.5px;color:#fff;transform:scaleX(0.9652);">3,17E+15</div>
<div class="r" style="left:242px;top:671px;width:180px;height:22px;overflow:hidden"><div class="r" style="left:-242px;top:-671px;width:1920px;height:1080px"><div class="t" style="left:244.90px;top:676px;font-size:14.5px;color:#fff;transform:scaleX(0.9602);">M.IRFAN NURDIN</div></div></div>
<div class="r" style="left:423px;top:671px;width:71px;height:22px;overflow:hidden"><div class="r" style="left:-423px;top:-671px;width:1920px;height:1080px"><div class="t" style="left:425.50px;top:676px;font-size:14.5px;color:#fff;transform:scaleX(0.9327);">250720EZ1XXX</div></div></div>
<div class="t" style="left:497.50px;top:676px;font-size:14.5px;color:#fff;transform:scaleX(1.0644);">08/12/2025</div>
<div class="t" style="left:589.50px;top:676px;font-size:14.5px;color:#fff;transform:scaleX(1.0070);">21-100-01</div>
<div class="t" style="left:787.16px;top:676px;font-size:14.5px;color:#fff;transform:scaleX(1.0053);">4.100.000</div>
<div class="t" style="left:977.89px;top:676px;font-size:14.5px;color:#fff;transform:scaleX(1.0057);">0</div>
<div class="t" style="left:1169.39px;top:676px;font-size:14.5px;color:#fff;transform:scaleX(1.0057);">0</div>
<div class="r" style="left:1181px;top:671px;width:72px;height:22px;overflow:hidden"><div class="r" style="left:-1181px;top:-671px;width:1920px;height:1080px"><div class="t" style="left:1184.25px;top:676px;font-size:14.5px;color:#fff;transform:scaleX(0.9836);">Tanpa Fasilitas</div></div></div>
<div class="t" style="left:1255.50px;top:676px;font-size:14.5px;color:#fff;transform:scaleX(1.0058);">Indonesia</div>
<div class="t" style="left:1333.69px;top:676px;font-size:14.5px;color:#fff;transform:scaleX(0.9652);">2,87E+20</div>
<div class="r" style="left:1397px;top:671px;width:71px;height:22px;overflow:hidden"><div class="r" style="left:-1397px;top:-671px;width:1920px;height:1080px"><div class="t" style="left:1398.75px;top:676px;font-size:14.5px;color:#fff;transform:scaleX(1.0350);">411121-100</div></div></div>
<div class="t" style="left:1471.60px;top:676px;font-size:14.5px;color:#fff;transform:scaleX(1.0371);">Normal</div>
<div class="t" style="left:1593.78px;top:676px;font-size:14.5px;color:#fff;font-weight:700;transform:scaleX(1.0582);">11</div>
<div class="r" style="left:25px;top:693px;width:144px;height:22px;overflow:hidden"><div class="r" style="left:-25px;top:-693px;width:1920px;height:1080px"><div class="t" style="left:28.75px;top:699px;font-size:13.75px;color:#fff;font-weight:700;font-family:'Liberation Serif',serif;transform:scaleX(1.0487);">Penghasilan yang diterima</div></div></div>
<div class="t" style="left:177.99px;top:698px;font-size:14.5px;color:#fff;transform:scaleX(0.9652);">3,17E+15</div>
<div class="r" style="left:242px;top:693px;width:180px;height:22px;overflow:hidden"><div class="r" style="left:-242px;top:-693px;width:1920px;height:1080px"><div class="t" style="left:244.90px;top:698px;font-size:14.5px;color:#fff;transform:scaleX(0.9325);">LIDYA YUNASTANTI</div></div></div>
<div class="r" style="left:423px;top:693px;width:71px;height:22px;overflow:hidden"><div class="r" style="left:-423px;top:-693px;width:1920px;height:1080px"><div class="t" style="left:425.50px;top:698px;font-size:14.5px;color:#fff;transform:scaleX(0.9323);">250720EXUXXX</div></div></div>
<div class="t" style="left:497.50px;top:698px;font-size:14.5px;color:#fff;transform:scaleX(1.0644);">08/12/2025</div>
<div class="t" style="left:589.50px;top:698px;font-size:14.5px;color:#fff;transform:scaleX(1.0070);">21-100-01</div>
<div class="t" style="left:787.16px;top:698px;font-size:14.5px;color:#fff;transform:scaleX(1.0053);">3.350.000</div>
<div class="t" style="left:977.89px;top:698px;font-size:14.5px;color:#fff;transform:scaleX(1.0057);">0</div>
<div class="t" style="left:1169.39px;top:698px;font-size:14.5px;color:#fff;transform:scaleX(1.0057);">0</div>
<div class="r" style="left:1181px;top:693px;width:72px;height:22px;overflow:hidden"><div class="r" style="left:-1181px;top:-693px;width:1920px;height:1080px"><div class="t" style="left:1184.25px;top:698px;font-size:14.5px;color:#fff;transform:scaleX(0.9836);">Tanpa Fasilitas</div></div></div>
<div class="t" style="left:1255.50px;top:698px;font-size:14.5px;color:#fff;transform:scaleX(1.0058);">Indonesia</div>
<div class="t" style="left:1333.69px;top:698px;font-size:14.5px;color:#fff;transform:scaleX(0.9652);">2,87E+20</div>
<div class="r" style="left:1397px;top:693px;width:71px;height:22px;overflow:hidden"><div class="r" style="left:-1397px;top:-693px;width:1920px;height:1080px"><div class="t" style="left:1398.75px;top:698px;font-size:14.5px;color:#fff;transform:scaleX(1.0350);">411121-100</div></div></div>
<div class="t" style="left:1471.60px;top:698px;font-size:14.5px;color:#fff;transform:scaleX(1.0371);">Normal</div>
<div class="t" style="left:1593.78px;top:698px;font-size:14.5px;color:#fff;font-weight:700;transform:scaleX(1.0582);">11</div>
<div class="r" style="left:25px;top:715px;width:144px;height:22px;overflow:hidden"><div class="r" style="left:-25px;top:-715px;width:1920px;height:1080px"><div class="t" style="left:28.75px;top:721px;font-size:13.75px;color:#fff;font-weight:700;font-family:'Liberation Serif',serif;transform:scaleX(1.0487);">Penghasilan yang diterima</div></div></div>
<div class="t" style="left:177.99px;top:720px;font-size:14.5px;color:#fff;transform:scaleX(0.9652);">3,67E+15</div>
<div class="r" style="left:242px;top:715px;width:180px;height:22px;overflow:hidden"><div class="r" style="left:-242px;top:-715px;width:1920px;height:1080px"><div class="t" style="left:244.90px;top:720px;font-size:14.5px;color:#fff;transform:scaleX(0.8804);">YOANES ARI PRASETIYO</div></div></div>
<div class="r" style="left:423px;top:715px;width:71px;height:22px;overflow:hidden"><div class="r" style="left:-423px;top:-715px;width:1920px;height:1080px"><div class="t" style="left:425.50px;top:720px;font-size:14.5px;color:#fff;transform:scaleX(0.9114);">250720EYCXXX</div></div></div>
<div class="t" style="left:497.50px;top:720px;font-size:14.5px;color:#fff;transform:scaleX(1.0644);">08/12/2025</div>
<div class="t" style="left:589.50px;top:720px;font-size:14.5px;color:#fff;transform:scaleX(1.0070);">21-100-01</div>
<div class="t" style="left:787.16px;top:720px;font-size:14.5px;color:#fff;transform:scaleX(1.0053);">5.500.000</div>
<div class="t" style="left:957.68px;top:720px;font-size:14.5px;color:#fff;">0,25</div>
<div class="t" style="left:1132.91px;top:720px;font-size:14.5px;color:#fff;transform:scaleX(1.0054);">13.750</div>
<div class="r" style="left:1181px;top:715px;width:72px;height:22px;overflow:hidden"><div class="r" style="left:-1181px;top:-715px;width:1920px;height:1080px"><div class="t" style="left:1184.25px;top:720px;font-size:14.5px;color:#fff;transform:scaleX(0.9836);">Tanpa Fasilitas</div></div></div>
<div class="t" style="left:1255.50px;top:720px;font-size:14.5px;color:#fff;transform:scaleX(1.0058);">Indonesia</div>
<div class="t" style="left:1333.69px;top:720px;font-size:14.5px;color:#fff;transform:scaleX(0.9652);">2,87E+20</div>
<div class="r" style="left:1397px;top:715px;width:71px;height:22px;overflow:hidden"><div class="r" style="left:-1397px;top:-715px;width:1920px;height:1080px"><div class="t" style="left:1398.75px;top:720px;font-size:14.5px;color:#fff;transform:scaleX(1.0350);">411121-100</div></div></div>
<div class="t" style="left:1471.60px;top:720px;font-size:14.5px;color:#fff;transform:scaleX(1.0371);">Normal</div>
<div class="t" style="left:1593.78px;top:720px;font-size:14.5px;color:#fff;font-weight:700;transform:scaleX(1.0582);">11</div>
<div class="r" style="left:25px;top:737px;width:144px;height:22px;overflow:hidden"><div class="r" style="left:-25px;top:-737px;width:1920px;height:1080px"><div class="t" style="left:28.75px;top:743px;font-size:13.75px;color:#fff;font-weight:700;font-family:'Liberation Serif',serif;transform:scaleX(1.0487);">Penghasilan yang diterima</div></div></div>
<div class="t" style="left:177.99px;top:742px;font-size:14.5px;color:#fff;transform:scaleX(0.9652);">3,18E+15</div>
<div class="r" style="left:242px;top:737px;width:180px;height:22px;overflow:hidden"><div class="r" style="left:-242px;top:-737px;width:1920px;height:1080px"><div class="t" style="left:244.90px;top:742px;font-size:14.5px;color:#fff;transform:scaleX(0.9064);">REZA RADITYA PUTRA</div></div></div>
<div class="r" style="left:423px;top:737px;width:71px;height:22px;overflow:hidden"><div class="r" style="left:-423px;top:-737px;width:1920px;height:1080px"><div class="t" style="left:425.50px;top:742px;font-size:14.5px;color:#fff;transform:scaleX(0.9331);">250720EX4XXX</div></div></div>
<div class="t" style="left:497.50px;top:742px;font-size:14.5px;color:#fff;transform:scaleX(1.0644);">08/12/2025</div>
<div class="t" style="left:589.50px;top:742px;font-size:14.5px;color:#fff;transform:scaleX(1.0070);">21-100-01</div>
<div class="t" style="left:787.16px;top:742px;font-size:14.5px;color:#fff;transform:scaleX(1.0053);">3.180.000</div>
<div class="t" style="left:977.89px;top:742px;font-size:14.5px;color:#fff;transform:scaleX(1.0057);">0</div>
<div class="t" style="left:1169.39px;top:742px;font-size:14.5px;color:#fff;transform:scaleX(1.0057);">0</div>
<div class="r" style="left:1181px;top:737px;width:72px;height:22px;overflow:hidden"><div class="r" style="left:-1181px;top:-737px;width:1920px;height:1080px"><div class="t" style="left:1184.25px;top:742px;font-size:14.5px;color:#fff;transform:scaleX(0.9836);">Tanpa Fasilitas</div></div></div>
<div class="t" style="left:1255.50px;top:742px;font-size:14.5px;color:#fff;transform:scaleX(1.0058);">Indonesia</div>
<div class="t" style="left:1333.69px;top:742px;font-size:14.5px;color:#fff;transform:scaleX(0.9652);">2,87E+20</div>
<div class="r" style="left:1397px;top:737px;width:71px;height:22px;overflow:hidden"><div class="r" style="left:-1397px;top:-737px;width:1920px;height:1080px"><div class="t" style="left:1398.75px;top:742px;font-size:14.5px;color:#fff;transform:scaleX(1.0350);">411121-100</div></div></div>
<div class="t" style="left:1471.60px;top:742px;font-size:14.5px;color:#fff;transform:scaleX(1.0371);">Normal</div>
<div class="t" style="left:1593.78px;top:742px;font-size:14.5px;color:#fff;font-weight:700;transform:scaleX(1.0582);">11</div>
<div class="r" style="left:25px;top:759px;width:144px;height:22px;overflow:hidden"><div class="r" style="left:-25px;top:-759px;width:1920px;height:1080px"><div class="t" style="left:28.75px;top:765px;font-size:13.75px;color:#fff;font-weight:700;font-family:'Liberation Serif',serif;transform:scaleX(1.0487);">Penghasilan yang diterima</div></div></div>
<div class="t" style="left:177.99px;top:764px;font-size:14.5px;color:#fff;transform:scaleX(0.9652);">9,99E+15</div>
<div class="r" style="left:242px;top:759px;width:180px;height:22px;overflow:hidden"><div class="r" style="left:-242px;top:-759px;width:1920px;height:1080px"><div class="t" style="left:244.90px;top:764px;font-size:14.5px;color:#fff;transform:scaleX(0.9231);">PENERIMA PENGHASILAN#3</div></div></div>
<div class="r" style="left:423px;top:759px;width:71px;height:22px;overflow:hidden"><div class="r" style="left:-423px;top:-759px;width:1920px;height:1080px"><div class="t" style="left:425.50px;top:764px;font-size:14.5px;color:#fff;transform:scaleX(0.9411);">250720EWXXXX</div></div></div>
<div class="t" style="left:497.50px;top:764px;font-size:14.5px;color:#fff;transform:scaleX(1.0644);">08/12/2025</div>
<div class="t" style="left:589.50px;top:764px;font-size:14.5px;color:#fff;transform:scaleX(1.0070);">21-100-01</div>
<div class="t" style="left:787.16px;top:764px;font-size:14.5px;color:#fff;transform:scaleX(1.0053);">3.000.000</div>
<div class="t" style="left:977.89px;top:764px;font-size:14.5px;color:#fff;transform:scaleX(1.0057);">0</div>
<div class="t" style="left:1169.39px;top:764px;font-size:14.5px;color:#fff;transform:scaleX(1.0057);">0</div>
<div class="r" style="left:1181px;top:759px;width:72px;height:22px;overflow:hidden"><div class="r" style="left:-1181px;top:-759px;width:1920px;height:1080px"><div class="t" style="left:1184.25px;top:764px;font-size:14.5px;color:#fff;transform:scaleX(0.9836);">Tanpa Fasilitas</div></div></div>
<div class="t" style="left:1255.50px;top:764px;font-size:14.5px;color:#fff;transform:scaleX(1.0058);">Indonesia</div>
<div class="t" style="left:1333.69px;top:764px;font-size:14.5px;color:#fff;transform:scaleX(0.9652);">2,87E+20</div>
<div class="r" style="left:1397px;top:759px;width:71px;height:22px;overflow:hidden"><div class="r" style="left:-1397px;top:-759px;width:1920px;height:1080px"><div class="t" style="left:1398.75px;top:764px;font-size:14.5px;color:#fff;transform:scaleX(1.0350);">411121-100</div></div></div>
<div class="t" style="left:1471.60px;top:764px;font-size:14.5px;color:#fff;transform:scaleX(1.0371);">Normal</div>
<div class="t" style="left:1593.78px;top:764px;font-size:14.5px;color:#fff;font-weight:700;transform:scaleX(1.0582);">11</div>
<div class="r" style="left:25px;top:781px;width:144px;height:22px;overflow:hidden"><div class="r" style="left:-25px;top:-781px;width:1920px;height:1080px"><div class="t" style="left:28.75px;top:787px;font-size:13.75px;color:#fff;font-weight:700;font-family:'Liberation Serif',serif;transform:scaleX(1.0487);">Penghasilan yang diterima</div></div></div>
<div class="t" style="left:177.99px;top:786px;font-size:14.5px;color:#fff;transform:scaleX(0.9652);">3,17E+15</div>
<div class="r" style="left:242px;top:781px;width:180px;height:22px;overflow:hidden"><div class="r" style="left:-242px;top:-781px;width:1920px;height:1080px"><div class="t" style="left:244.90px;top:786px;font-size:14.5px;color:#fff;transform:scaleX(0.9014);">SKOLASTIKA RAISSA WIJAYA</div></div></div>
<div class="r" style="left:423px;top:781px;width:71px;height:22px;overflow:hidden"><div class="r" style="left:-423px;top:-781px;width:1920px;height:1080px"><div class="t" style="left:425.50px;top:786px;font-size:14.5px;color:#fff;transform:scaleX(0.9184);">250720ETCXXX</div></div></div>
<div class="t" style="left:497.50px;top:786px;font-size:14.5px;color:#fff;transform:scaleX(1.0644);">08/12/2025</div>
<div class="t" style="left:589.50px;top:786px;font-size:14.5px;color:#fff;transform:scaleX(1.0070);">21-100-01</div>
<div class="t" style="left:799.30px;top:786px;font-size:14.5px;color:#fff;transform:scaleX(1.0055);">954.286</div>
<div class="t" style="left:977.89px;top:786px;font-size:14.5px;color:#fff;transform:scaleX(1.0057);">0</div>
<div class="t" style="left:1169.39px;top:786px;font-size:14.5px;color:#fff;transform:scaleX(1.0057);">0</div>
<div class="r" style="left:1181px;top:781px;width:72px;height:22px;overflow:hidden"><div class="r" style="left:-1181px;top:-781px;width:1920px;height:1080px"><div class="t" style="left:1184.25px;top:786px;font-size:14.5px;color:#fff;transform:scaleX(0.9836);">Tanpa Fasilitas</div></div></div>
<div class="t" style="left:1255.50px;top:786px;font-size:14.5px;color:#fff;transform:scaleX(1.0058);">Indonesia</div>
<div class="t" style="left:1333.69px;top:786px;font-size:14.5px;color:#fff;transform:scaleX(0.9652);">2,87E+20</div>
<div class="r" style="left:1397px;top:781px;width:71px;height:22px;overflow:hidden"><div class="r" style="left:-1397px;top:-781px;width:1920px;height:1080px"><div class="t" style="left:1398.75px;top:786px;font-size:14.5px;color:#fff;transform:scaleX(1.0350);">411121-100</div></div></div>
<div class="t" style="left:1471.60px;top:786px;font-size:14.5px;color:#fff;transform:scaleX(1.0371);">Normal</div>
<div class="t" style="left:1593.78px;top:786px;font-size:14.5px;color:#fff;font-weight:700;transform:scaleX(1.0582);">11</div>
<div class="r" style="left:25px;top:803px;width:144px;height:22px;overflow:hidden"><div class="r" style="left:-25px;top:-803px;width:1920px;height:1080px"><div class="t" style="left:28.75px;top:809px;font-size:13.75px;color:#fff;font-weight:700;font-family:'Liberation Serif',serif;transform:scaleX(1.0487);">Penghasilan yang diterima</div></div></div>
<div class="t" style="left:177.99px;top:808px;font-size:14.5px;color:#fff;transform:scaleX(0.9652);">3,17E+15</div>
<div class="r" style="left:242px;top:803px;width:180px;height:22px;overflow:hidden"><div class="r" style="left:-242px;top:-803px;width:1920px;height:1080px"><div class="t" style="left:244.90px;top:808px;font-size:14.5px;color:#fff;transform:scaleX(0.9292);">HENDRO WITIANTO CAHYONO</div></div></div>
<div class="r" style="left:423px;top:803px;width:71px;height:22px;overflow:hidden"><div class="r" style="left:-423px;top:-803px;width:1920px;height:1080px"><div class="t" style="left:425.50px;top:808px;font-size:14.5px;color:#fff;transform:scaleX(0.9354);">250720EVVXXX</div></div></div>
<div class="t" style="left:506.52px;top:808px;font-size:14.5px;color:#fff;transform:scaleX(1.0644);">08/12/2025</div>
<div class="t" style="left:589.50px;top:808px;font-size:14.5px;color:#fff;transform:scaleX(1.0070);">21-100-01</div>
<div class="t" style="left:787.16px;top:808px;font-size:14.5px;color:#fff;transform:scaleX(1.0053);">2.160.000</div>
<div class="t" style="left:977.89px;top:808px;font-size:14.5px;color:#fff;transform:scaleX(1.0057);">0</div>
<div class="t" style="left:1169.39px;top:808px;font-size:14.5px;color:#fff;transform:scaleX(1.0057);">0</div>
<div class="r" style="left:1181px;top:803px;width:72px;height:22px;overflow:hidden"><div class="r" style="left:-1181px;top:-803px;width:1920px;height:1080px"><div class="t" style="left:1184.25px;top:808px;font-size:14.5px;color:#fff;transform:scaleX(0.9836);">Tanpa Fasilitas</div></div></div>
<div class="t" style="left:1255.50px;top:808px;font-size:14.5px;color:#fff;transform:scaleX(1.0058);">Indonesia</div>
<div class="t" style="left:1333.69px;top:808px;font-size:14.5px;color:#fff;transform:scaleX(0.9652);">2,87E+20</div>
<div class="r" style="left:1397px;top:803px;width:71px;height:22px;overflow:hidden"><div class="r" style="left:-1397px;top:-803px;width:1920px;height:1080px"><div class="t" style="left:1398.75px;top:808px;font-size:14.5px;color:#fff;transform:scaleX(1.0350);">411121-100</div></div></div>
<div class="t" style="left:1471.60px;top:808px;font-size:14.5px;color:#fff;transform:scaleX(1.0371);">Normal</div>
<div class="t" style="left:1593.78px;top:808px;font-size:14.5px;color:#fff;font-weight:700;transform:scaleX(1.0582);">11</div>
<div class="r" style="left:25px;top:825px;width:144px;height:22px;overflow:hidden"><div class="r" style="left:-25px;top:-825px;width:1920px;height:1080px"><div class="t" style="left:28.75px;top:831px;font-size:13.75px;color:#fff;font-weight:700;font-family:'Liberation Serif',serif;transform:scaleX(1.0487);">Penghasilan yang diterima</div></div></div>
<div class="t" style="left:177.99px;top:830px;font-size:14.5px;color:#fff;transform:scaleX(0.9652);">3,17E+15</div>
<div class="r" style="left:242px;top:825px;width:180px;height:22px;overflow:hidden"><div class="r" style="left:-242px;top:-825px;width:1920px;height:1080px"><div class="t" style="left:244.90px;top:830px;font-size:14.5px;color:#fff;transform:scaleX(0.9126);">FRIENANTY YAHYA</div></div></div>
<div class="r" style="left:423px;top:825px;width:71px;height:22px;overflow:hidden"><div class="r" style="left:-423px;top:-825px;width:1920px;height:1080px"><div class="t" style="left:425.50px;top:830px;font-size:14.5px;color:#fff;transform:scaleX(0.9241);">250720ES6XXX</div></div></div>
<div class="t" style="left:506.52px;top:830px;font-size:14.5px;color:#fff;transform:scaleX(1.0644);">08/12/2025</div>
<div class="t" style="left:589.50px;top:830px;font-size:14.5px;color:#fff;transform:scaleX(1.0070);">21-100-01</div>
<div class="t" style="left:787.16px;top:830px;font-size:14.5px;color:#fff;transform:scaleX(1.0053);">1.000.000</div>
<div class="t" style="left:977.89px;top:830px;font-size:14.5px;color:#fff;transform:scaleX(1.0057);">0</div>
<div class="t" style="left:1169.39px;top:830px;font-size:14.5px;color:#fff;transform:scaleX(1.0057);">0</div>
<div class="r" style="left:1181px;top:825px;width:72px;height:22px;overflow:hidden"><div class="r" style="left:-1181px;top:-825px;width:1920px;height:1080px"><div class="t" style="left:1184.25px;top:830px;font-size:14.5px;color:#fff;transform:scaleX(0.9836);">Tanpa Fasilitas</div></div></div>
<div class="t" style="left:1255.50px;top:830px;font-size:14.5px;color:#fff;transform:scaleX(1.0058);">Indonesia</div>
<div class="t" style="left:1333.69px;top:830px;font-size:14.5px;color:#fff;transform:scaleX(0.9652);">2,87E+20</div>
<div class="r" style="left:1397px;top:825px;width:71px;height:22px;overflow:hidden"><div class="r" style="left:-1397px;top:-825px;width:1920px;height:1080px"><div class="t" style="left:1398.75px;top:830px;font-size:14.5px;color:#fff;transform:scaleX(1.0350);">411121-100</div></div></div>
<div class="t" style="left:1471.60px;top:830px;font-size:14.5px;color:#fff;transform:scaleX(1.0371);">Normal</div>
<div class="t" style="left:1593.78px;top:830px;font-size:14.5px;color:#fff;font-weight:700;transform:scaleX(1.0582);">11</div>
<div class="r" style="left:25px;top:847px;width:144px;height:22px;overflow:hidden"><div class="r" style="left:-25px;top:-847px;width:1920px;height:1080px"><div class="t" style="left:28.75px;top:853px;font-size:13.75px;color:#fff;font-weight:700;font-family:'Liberation Serif',serif;transform:scaleX(1.0487);">Penghasilan yang diterima</div></div></div>
<div class="t" style="left:177.99px;top:852px;font-size:14.5px;color:#fff;transform:scaleX(0.9652);">9,99E+15</div>
<div class="r" style="left:242px;top:847px;width:180px;height:22px;overflow:hidden"><div class="r" style="left:-242px;top:-847px;width:1920px;height:1080px"><div class="t" style="left:244.90px;top:852px;font-size:14.5px;color:#fff;transform:scaleX(0.9231);">PENERIMA PENGHASILAN#3</div></div></div>
<div class="r" style="left:423px;top:847px;width:71px;height:22px;overflow:hidden"><div class="r" style="left:-423px;top:-847px;width:1920px;height:1080px"><div class="t" style="left:425.50px;top:852px;font-size:14.5px;color:#fff;transform:scaleX(0.9295);">250720EZIXXX</div></div></div>
<div class="t" style="left:506.52px;top:852px;font-size:14.5px;color:#fff;transform:scaleX(1.0644);">08/12/2025</div>
<div class="t" style="left:589.50px;top:852px;font-size:14.5px;color:#fff;transform:scaleX(1.0070);">21-100-01</div>
<div class="t" style="left:787.16px;top:852px;font-size:14.5px;color:#fff;transform:scaleX(1.0053);">5.020.000</div>
<div class="t" style="left:977.89px;top:852px;font-size:14.5px;color:#fff;transform:scaleX(1.0057);">0</div>
<div class="t" style="left:1169.39px;top:852px;font-size:14.5px;color:#fff;transform:scaleX(1.0057);">0</div>
<div class="r" style="left:1181px;top:847px;width:72px;height:22px;overflow:hidden"><div class="r" style="left:-1181px;top:-847px;width:1920px;height:1080px"><div class="t" style="left:1184.25px;top:852px;font-size:14.5px;color:#fff;transform:scaleX(0.9836);">Tanpa Fasilitas</div></div></div>
<div class="t" style="left:1255.50px;top:852px;font-size:14.5px;color:#fff;transform:scaleX(1.0058);">Indonesia</div>
<div class="t" style="left:1333.69px;top:852px;font-size:14.5px;color:#fff;transform:scaleX(0.9652);">2,87E+20</div>
<div class="r" style="left:1397px;top:847px;width:71px;height:22px;overflow:hidden"><div class="r" style="left:-1397px;top:-847px;width:1920px;height:1080px"><div class="t" style="left:1398.75px;top:852px;font-size:14.5px;color:#fff;transform:scaleX(1.0350);">411121-100</div></div></div>
<div class="t" style="left:1471.60px;top:852px;font-size:14.5px;color:#fff;transform:scaleX(1.0371);">Normal</div>
<div class="t" style="left:1593.78px;top:852px;font-size:14.5px;color:#fff;font-weight:700;transform:scaleX(1.0582);">11</div>
<div class="r" style="left:25px;top:869px;width:144px;height:22px;overflow:hidden"><div class="r" style="left:-25px;top:-869px;width:1920px;height:1080px"><div class="t" style="left:28.75px;top:875px;font-size:13.75px;color:#fff;font-weight:700;font-family:'Liberation Serif',serif;transform:scaleX(1.0487);">Penghasilan yang diterima</div></div></div>
<div class="t" style="left:177.99px;top:874px;font-size:14.5px;color:#fff;transform:scaleX(0.9652);">3,17E+15</div>
<div class="r" style="left:242px;top:869px;width:180px;height:22px;overflow:hidden"><div class="r" style="left:-242px;top:-869px;width:1920px;height:1080px"><div class="t" style="left:244.90px;top:874px;font-size:14.5px;color:#fff;transform:scaleX(0.8918);">SANTI KUSRINY</div></div></div>
<div class="r" style="left:423px;top:869px;width:71px;height:22px;overflow:hidden"><div class="r" style="left:-423px;top:-869px;width:1920px;height:1080px"><div class="t" style="left:425.50px;top:874px;font-size:14.5px;color:#fff;transform:scaleX(0.9405);">250720EV1XXX</div></div></div>
<div class="t" style="left:506.52px;top:874px;font-size:14.5px;color:#fff;transform:scaleX(1.0644);">08/12/2025</div>
<div class="t" style="left:589.50px;top:874px;font-size:14.5px;color:#fff;transform:scaleX(1.0070);">21-100-01</div>
<div class="t" style="left:787.16px;top:874px;font-size:14.5px;color:#fff;transform:scaleX(1.0053);">1.500.000</div>
<div class="t" style="left:977.89px;top:874px;font-size:14.5px;color:#fff;transform:scaleX(1.0057);">0</div>
<div class="t" style="left:1169.39px;top:874px;font-size:14.5px;color:#fff;transform:scaleX(1.0057);">0</div>
<div class="r" style="left:1181px;top:869px;width:72px;height:22px;overflow:hidden"><div class="r" style="left:-1181px;top:-869px;width:1920px;height:1080px"><div class="t" style="left:1184.25px;top:874px;font-size:14.5px;color:#fff;transform:scaleX(0.9836);">Tanpa Fasilitas</div></div></div>
<div class="t" style="left:1255.50px;top:874px;font-size:14.5px;color:#fff;transform:scaleX(1.0058);">Indonesia</div>
<div class="t" style="left:1333.69px;top:874px;font-size:14.5px;color:#fff;transform:scaleX(0.9652);">2,87E+20</div>
<div class="r" style="left:1397px;top:869px;width:71px;height:22px;overflow:hidden"><div class="r" style="left:-1397px;top:-869px;width:1920px;height:1080px"><div class="t" style="left:1398.75px;top:874px;font-size:14.5px;color:#fff;transform:scaleX(1.0350);">411121-100</div></div></div>
<div class="t" style="left:1471.60px;top:874px;font-size:14.5px;color:#fff;transform:scaleX(1.0371);">Normal</div>
<div class="t" style="left:1593.78px;top:874px;font-size:14.5px;color:#fff;font-weight:700;transform:scaleX(1.0582);">11</div>
<div class="t" style="left:45.02px;top:897px;font-size:13.75px;color:#fff;font-weight:700;font-family:'Liberation Serif',serif;transform:scaleX(1.1373);">#N/A</div>
<div class="t" style="left:45.02px;top:919px;font-size:13.75px;color:#fff;font-weight:700;font-family:'Liberation Serif',serif;transform:scaleX(1.1373);">#N/A</div>
<div class="t" style="left:45.02px;top:941px;font-size:13.75px;color:#fff;font-weight:700;font-family:'Liberation Serif',serif;transform:scaleX(1.1373);">#N/A</div>
<div class="t" style="left:45.02px;top:963px;font-size:13.75px;color:#fff;font-weight:700;font-family:'Liberation Serif',serif;transform:scaleX(1.1373);">#N/A</div>
<div class="r" style="left:25px;top:517px;width:1587px;height:1px;background:#000;"></div>
<div class="r" style="left:25px;top:539px;width:1587px;height:1px;background:#000;"></div>
<div class="r" style="left:25px;top:561px;width:1587px;height:1px;background:#000;"></div>
<div class="r" style="left:25px;top:583px;width:1587px;height:1px;background:#000;"></div>
<div class="r" style="left:25px;top:605px;width:1587px;height:1px;background:#000;"></div>
<div class="r" style="left:25px;top:627px;width:1587px;height:1px;background:#000;"></div>
<div class="r" style="left:25px;top:649px;width:1587px;height:1px;background:#000;"></div>
<div class="r" style="left:25px;top:671px;width:1587px;height:1px;background:#000;"></div>
<div class="r" style="left:25px;top:693px;width:1587px;height:1px;background:#000;"></div>
<div class="r" style="left:25px;top:715px;width:1587px;height:1px;background:#000;"></div>
<div class="r" style="left:25px;top:737px;width:1587px;height:1px;background:#000;"></div>
<div class="r" style="left:25px;top:759px;width:1587px;height:1px;background:#000;"></div>
<div class="r" style="left:25px;top:781px;width:1587px;height:1px;background:#000;"></div>
<div class="r" style="left:25px;top:803px;width:1587px;height:1px;background:#000;"></div>
<div class="r" style="left:25px;top:825px;width:1587px;height:1px;background:#000;"></div>
<div class="r" style="left:25px;top:847px;width:1587px;height:1px;background:#000;"></div>
<div class="r" style="left:25px;top:869px;width:1587px;height:1px;background:#000;"></div>
<div class="r" style="left:25px;top:891px;width:1587px;height:1px;background:#000;"></div>
<div class="r" style="left:25px;top:913px;width:1587px;height:1px;background:#000;"></div>
<div class="r" style="left:25px;top:935px;width:1587px;height:1px;background:#000;"></div>
<div class="r" style="left:25px;top:957px;width:1587px;height:1px;background:#000;"></div>
<div class="r" style="left:25px;top:979px;width:1587px;height:1px;background:#000;"></div>
<div class="r" style="left:169px;top:495px;width:1px;height:487px;background:#000;"></div>
<div class="r" style="left:422px;top:495px;width:1px;height:487px;background:#000;"></div>
<div class="r" style="left:494px;top:495px;width:1px;height:487px;background:#000;"></div>
<div class="r" style="left:586px;top:495px;width:1px;height:487px;background:#000;"></div>
<div class="r" style="left:658px;top:495px;width:1px;height:487px;background:#000;"></div>
<div class="r" style="left:859px;top:495px;width:1px;height:487px;background:#000;"></div>
<div class="r" style="left:988px;top:495px;width:1px;height:487px;background:#000;"></div>
<div class="r" style="left:1180px;top:495px;width:1px;height:487px;background:#000;"></div>
<div class="r" style="left:1252px;top:495px;width:1px;height:487px;background:#000;"></div>
<div class="r" style="left:1324px;top:495px;width:1px;height:487px;background:#000;"></div>
<div class="r" style="left:1396px;top:495px;width:1px;height:487px;background:#000;"></div>
<div class="r" style="left:1468px;top:495px;width:1px;height:487px;background:#000;"></div>
<div class="r" style="left:1540px;top:495px;width:1px;height:487px;background:#000;"></div>
<div class="r" style="left:1612px;top:495px;width:1px;height:487px;background:#000;"></div>
<div class="r" style="left:97px;top:891px;width:1px;height:91px;background:#000;"></div>
<svg class="r" style="left:25px;top:891px" width="8" height="8" viewBox="0 0 8 8"><path d="M0 0h7L0 7z" fill="#1d7a2e"/></svg>
<svg class="r" style="left:25px;top:913px" width="8" height="8" viewBox="0 0 8 8"><path d="M0 0h7L0 7z" fill="#1d7a2e"/></svg>
<svg class="r" style="left:25px;top:935px" width="8" height="8" viewBox="0 0 8 8"><path d="M0 0h7L0 7z" fill="#1d7a2e"/></svg>
<svg class="r" style="left:25px;top:957px" width="8" height="8" viewBox="0 0 8 8"><path d="M0 0h7L0 7z" fill="#1d7a2e"/></svg>
<div class="r" style="left:241px;top:246px;width:1px;height:736px;background:#c4c4c4;"></div>
<div class="r" style="left:168px;top:890px;width:74px;height:24px;box-shadow:inset 0 0 0 2px #217346,inset 0 0 0 3px #ffffff"></div>
<div class="r" style="left:239px;top:911px;width:4px;height:4px;background:#217346;box-shadow:0 0 0 1px #fff"></div>
<div class="r" style="left:1902px;top:229px;width:15px;height:15px;background:#ffffff;box-shadow:inset 0 0 0 1px #8a8a8a"></div>
<svg class="r" style="left:1905px;top:234px" width="9" height="5" viewBox="0 0 9 5"><path d="M0 4.5h8.5L4.25 0z" fill="#222"/></svg>
<div class="r" style="left:1902px;top:244px;width:15px;height:89px;background:#ffffff;box-shadow:inset 0 0 0 1px #8a8a8a"></div>
<div class="r" style="left:1902px;top:967px;width:15px;height:15px;background:#ffffff;box-shadow:inset 0 0 0 1px #8a8a8a"></div>
<svg class="r" style="left:1905px;top:972px" width="9" height="5" viewBox="0 0 9 5"><path d="M0 0h8.5L4.25 4.5z" fill="#222"/></svg>
<div class="r" style="left:0px;top:982px;width:1920px;height:28px;background:#e6e6e6;"></div>
<div class="r" style="left:0px;top:1009px;width:1920px;height:1px;background:#d4d4d4;"></div>
<svg class="r" style="left:27px;top:990px" width="6" height="10" viewBox="0 0 6 10"><path d="M5 0.5v9L0.5 5z" fill="#b4b4b4"/></svg>
<svg class="r" style="left:56px;top:990px" width="6" height="10" viewBox="0 0 6 10"><path d="M1 0.5v9L5.5 5z" fill="#b4b4b4"/></svg>
<div class="r" style="left:100px;top:986px;width:1px;height:20px;background:#c6c6c6;"></div>
<div class="t" style="left:114.00px;top:989px;font-size:13.0px;color:#444;transform:scaleX(0.9721);">Kode Objek PPh 21</div>
<div class="r" style="left:241px;top:986px;width:1px;height:20px;background:#c6c6c6;"></div>
<div class="r" style="left:244px;top:985px;width:61px;height:22px;background:#548235;"></div>
<div class="t" style="left:254.40px;top:989px;font-size:13.0px;color:#f0f7ea;transform:scaleX(0.8794);">PPh 21</div>
<div class="r" style="left:307px;top:981px;width:161px;height:26px;background:linear-gradient(#ffffff 45%,#d9ecd0);box-shadow:inset 0 0 0 1px #cfcfcf"></div>
<div class="r" style="left:307px;top:1005px;width:161px;height:2px;background:#217346;"></div>
<div class="t" style="left:320.00px;top:989px;font-size:13.0px;color:#1e6b45;font-weight:700;transform:scaleX(0.9688);">Daftar BP21 Karyawan</div>
<div class="r" style="left:470px;top:985px;width:183px;height:22px;background:#70ad47;"></div>
<div class="t" style="left:479.50px;top:989px;font-size:13.0px;color:#111;font-weight:700;">BP21 Final Atau tidak final</div>
<div class="r" style="left:655px;top:986px;width:1px;height:20px;background:#c6c6c6;"></div>
<div class="r" style="left:658px;top:985px;width:100px;height:22px;background:#ed7d31;"></div>
<div class="t" style="left:671.00px;top:989px;font-size:13.0px;color:#3a2010;transform:scaleX(0.9443);">PPh Unifikasi</div>
<div class="r" style="left:760px;top:986px;width:1px;height:20px;background:#c6c6c6;"></div>
<svg class="r" style="left:793px;top:987px" width="17" height="17" viewBox="0 0 17 17"><circle cx="8.5" cy="8.5" r="7.3" fill="none" stroke="#666" stroke-width="1.2"/><path d="M8.5 4.5v8M4.5 8.5h8" stroke="#666" stroke-width="1.4"/></svg>
<div class="r" style="left:1687px;top:990px;width:2px;height:2px;background:#b4b4b4;"></div>
<div class="r" style="left:1687px;top:995px;width:2px;height:2px;background:#b4b4b4;"></div>
<div class="r" style="left:1687px;top:1000px;width:2px;height:2px;background:#b4b4b4;"></div>
<div class="r" style="left:1704px;top:989px;width:15px;height:15px;background:#ffffff;box-shadow:inset 0 0 0 1px #a6a6a6"></div>
<svg class="r" style="left:1708px;top:992px" width="5" height="9" viewBox="0 0 5 9"><path d="M4.5 0v8.5L0 4.25z" fill="#222"/></svg>
<div class="r" style="left:1718px;top:989px;width:154px;height:15px;background:#ffffff;box-shadow:inset 0 0 0 1px #a6a6a6"></div>
<div class="r" style="left:1718px;top:989px;width:2px;height:15px;background:#a6a6a6;"></div>
<div class="r" style="left:1882px;top:989px;width:15px;height:15px;background:#ffffff;box-shadow:inset 0 0 0 1px #a6a6a6"></div>
<svg class="r" style="left:1887px;top:992px" width="5" height="9" viewBox="0 0 5 9"><path d="M0 0v8.5L4.5 4.25z" fill="#222"/></svg>
<div class="r" style="left:0px;top:1010px;width:1920px;height:22px;background:#f3f2f1;"></div>
<div class="t" style="left:8.00px;top:1016px;font-size:11.75px;color:#333;transform:scaleX(0.8833);">Ready</div>
<svg class="r" style="left:57px;top:1014px" width="16" height="14" viewBox="0 0 16 14"><rect x="1" y="1" width="13" height="11" fill="none" stroke="#444" stroke-width="1"/><path d="M1 3.5h13M3 6h3M3 9h2" stroke="#444" stroke-width="1"/><circle cx="10.5" cy="9" r="3.2" fill="#f3f2f1" stroke="#444" stroke-width="1"/><circle cx="10.5" cy="9" r="1.3" fill="#444"/></svg>
<svg class="r" style="left:89px;top:1013px" width="16" height="16" viewBox="0 0 16 16"><circle cx="7" cy="2.5" r="1.8" fill="none" stroke="#444" stroke-width="1"/><path d="M1 6l6 1 6-1M7 7v4l-3 4M7 11l2 2M9 11l5 4M14 11l-5 4" fill="none" stroke="#444" stroke-width="1"/></svg>
<div class="t" style="left:107.50px;top:1016px;font-size:11.75px;color:#333;transform:scaleX(0.9620);">Accessibility: Investigate</div>
<div class="r" style="left:1620px;top:1010px;width:40px;height:22px;background:#d6d6d6;"></div>
<svg class="r" style="left:1632px;top:1014px" width="15" height="14" viewBox="0 0 15 14"><path d="M1 1h12v12H1zM1 5h12M1 9h12M5 1v12M9 1v12" fill="none" stroke="#333" stroke-width="1.1"/></svg>
<svg class="r" style="left:1672px;top:1014px" width="16" height="14" viewBox="0 0 16 14"><rect x="1" y="1" width="13" height="12" fill="none" stroke="#333" stroke-width="1.1"/><rect x="3.5" y="3.5" width="8" height="7" fill="none" stroke="#333"/><path d="M5 6h5M5 8h5" stroke="#333"/></svg>
<svg class="r" style="left:1712px;top:1014px" width="16" height="14" viewBox="0 0 16 14"><rect x="1" y="1" width="13" height="12" fill="none" stroke="#333" stroke-width="1.1"/><path d="M1 7.5h7V1M4.5 1v6.5" fill="none" stroke="#333" stroke-width="1.1"/></svg>
<div class="r" style="left:1745px;top:1020px;width:8px;height:1px;background:#444;"></div>
<div class="r" style="left:1759px;top:1021px;width:100px;height:1px;background:#444;"></div>
<div class="r" style="left:1807px;top:1016px;width:4px;height:10px;background:#444;"></div>
<div class="r" style="left:1863px;top:1020px;width:9px;height:1px;background:#444;"></div>
<div class="r" style="left:1867px;top:1016px;width:1px;height:9px;background:#444;"></div>
<div class="t" style="left:1885.60px;top:1014px;font-size:11.75px;color:#444;transform:scaleX(0.8586);">100%</div>
<div class="r" style="left:0px;top:1032px;width:1920px;height:48px;background:linear-gradient(90deg,#d9dbe8 0%,#dfe1ee 40%,#e3e3ef 70%,#dcd9e8 100%)"></div>
<div class="r" style="left:0px;top:1032px;width:1920px;height:1px;background:#c9cad6;"></div>
<svg class="r" style="left:14px;top:1042px" width="34" height="30" viewBox="0 0 34 30"><path d="M6 20c-3 0-4.5-2-4.5-4s2-4 4.5-4c0.5-4 4-6.5 7.5-6.5 3 0 5.5 2 6.5 4.5 3 0 6 2 6 5s-2.5 5-5.5 5z" fill="#c9d6ec" stroke="#aabbd9" stroke-width="0.6"/><path d="M8 12c1-3 3-5 6-5" fill="none" stroke="#eef3fb" stroke-width="1.5"/><path d="M21 19c-2 3-2.8 5-2.8 6.2a2.8 2.8 0 0 0 5.6 0c0-1.2-.8-3.2-2.8-6.2z" fill="#2a74e0"/></svg>
<div class="r" style="left:30px;top:1038px;width:17px;height:17px;background:#c42b1c;border-radius:50%"></div>
<div class="t" style="left:35.50px;top:1040px;font-size:11.75px;color:#fff;transform:scaleX(0.9183);">2</div>
<div class="t" style="left:50.50px;top:1042px;font-size:12.5px;color:#1b1b1b;transform:scaleX(0.8952);">30°C</div>
<div class="t" style="left:50.50px;top:1058px;font-size:12.5px;color:#444;transform:scaleX(0.9735);">Hujan ringan</div>
<svg class="r" style="left:617px;top:1045px" width="24" height="24" viewBox="0 0 24 24"><rect x="0" y="0" width="11.2" height="11.2" fill="#3aa0f0"/><rect x="12.4" y="0" width="11.2" height="11.2" fill="#2b8de6"/><rect x="0" y="12.4" width="11.2" height="11.2" fill="#1a7fdc"/><rect x="12.4" y="12.4" width="11.2" height="11.2" fill="#0f6fd0"/></svg>
<div class="r" style="left:655px;top:1041px;width:218px;height:30px;background:#f6f6fb;border-radius:15px;box-shadow:0 0 0 1px #dcdce6"></div>
<svg class="r" style="left:664px;top:1047px" width="18" height="18" viewBox="0 0 18 18"><circle cx="7.5" cy="7.5" r="5.5" fill="none" stroke="#222" stroke-width="1.6"/><path d="M11.5 11.5L16 16" stroke="#222" stroke-width="1.8"/></svg>
<div class="t" style="left:690.70px;top:1050px;font-size:13.25px;color:#555;transform:scaleX(0.9481);">Search</div>
<svg class="r" style="left:824px;top:1042px" width="44" height="30" viewBox="0 0 44 30"><ellipse cx="24" cy="26.5" rx="19" ry="2.5" fill="#e6cf9b"/><path d="M4 10l4-4 3 1 4 3 12 2c4 0 7 1 8 3l3 9-1 0-3-6-2 1v7h-1.5l-.5-6h-9l-1 6h-1.5l-.5-6c-1-1-2-4-3-6l-4-1-5 0z" fill="#f2f2f6" stroke="#3d3d55" stroke-width="0.9"/><path d="M9 7l1 5M12 8l0.5 5M16 10l-1 7M20 11l-1 7M24 12l-1 8M28 12l-1 8M32 13l-.5 7" stroke="#33334d" stroke-width="1.6"/><path d="M36 15l4 9" stroke="#33334d" stroke-width="1.4"/></svg>
<svg class="r" style="left:884px;top:1044px" width="26" height="26" viewBox="0 0 26 26"><rect x="7" y="1" width="17" height="15" fill="#fbfbfb"/><rect x="1" y="7" width="18" height="16" fill="#2a2a2a"/><rect x="6" y="7" width="13" height="10" fill="#c8c8c8"/></svg>
<svg class="r" style="left:927px;top:1043px" width="26" height="28" viewBox="0 0 26 28"><circle cx="13" cy="13" r="11" fill="none" stroke="#1f8f55" stroke-width="2.4"/><path d="M4 24l2.5-6" stroke="#1f8f55" stroke-width="2.4"/><path d="M8.5 8.5c0 5 4 9 9 9l1.5-2.2-2.8-1.6-1 1.2c-1.6-.6-3.3-2.3-3.9-3.9l1.2-1-1.6-2.8z" fill="#1f8f55"/></svg>
<div class="r" style="left:937px;top:1074px;width:6px;height:3px;background:#8a8a8a;border-radius:2px"></div>
<svg class="r" style="left:971px;top:1043px" width="26" height="28" viewBox="0 0 26 28"><circle cx="13" cy="13" r="12" fill="#1e8fd6"/><path d="M5 16c0-6 5-10 10-10 5 0 8 3 8 7 0 3-3 4-6 4-2 0-3-1-3-2 0-2 2-2 2-2-3-2-7 0-7 4 0 5 5 8 10 7-3 3-11 2-14-8z" fill="#50d37a"/><path d="M6 18c2 5 8 8 14 6-6 2-13-2-14-6z" fill="#0c5ea8"/></svg>
<svg class="r" style="left:1015px;top:1043px" width="26" height="28" viewBox="0 0 26 28"><path d="M1 5h9l2 2h13v17H1z" fill="#f4b400"/><path d="M1 10h24v14H1z" fill="#ffd35a"/><rect x="7" y="16" width="13" height="6" rx="2" fill="#1a73d8"/></svg>
<div class="r" style="left:1025px;top:1074px;width:6px;height:3px;background:#8a8a8a;border-radius:2px"></div>
<svg class="r" style="left:1059px;top:1043px" width="26" height="28" viewBox="0 0 26 28"><circle cx="13" cy="14" r="11.5" fill="#e33b2e"/><path d="M13 14L3 8A11.5 11.5 0 0 1 23 8z" fill="#e33b2e"/><path d="M13 14L23 8A11.5 11.5 0 0 1 14 25.5z" fill="#f9c117"/><path d="M13 14L14 25.5A11.5 11.5 0 0 1 3 8z" fill="#21a456"/><circle cx="13" cy="14" r="5" fill="#fff"/><circle cx="13" cy="14" r="3.8" fill="#3a82f0"/><circle cx="21" cy="6" r="6" fill="#fff"/><rect x="17" y="1.5" width="8" height="9" rx="1.5" fill="#b01818"/><circle cx="21" cy="5.5" r="2" fill="#ffe"/></svg>
<div class="r" style="left:1069px;top:1074px;width:6px;height:3px;background:#8a8a8a;border-radius:2px"></div>
<svg class="r" style="left:1104px;top:1043px" width="26" height="28" viewBox="0 0 26 28"><circle cx="13" cy="14" r="12" fill="#1ed760"/><path d="M6.5 10.5c4-1.5 9-1 13 1M7 14c3.5-1 7.5-.8 11 1M7.8 17.5c3-.8 6-.6 8.5.8" fill="none" stroke="#111" stroke-width="2" stroke-linecap="round"/></svg>
<div class="r" style="left:1114px;top:1074px;width:6px;height:3px;background:#8a8a8a;border-radius:2px"></div>
<svg class="r" style="left:1148px;top:1043px" width="26" height="28" viewBox="0 0 26 28"><path d="M3 3h10M3 3v10M3 6h3M6 3v3M10 3h3v4M3 10v3h3" fill="none" stroke="#d33" stroke-width="2.2" stroke-dasharray="2.5 1.5"/><path d="M13 13l9 10M23 13l-9 10" stroke="#4aa3e8" stroke-width="1.6"/><circle cx="14" cy="24" r="2.5" fill="#fff" stroke="#4aa3e8" stroke-width="1.6"/><circle cx="23" cy="18" r="2.5" fill="#fff" stroke="#4aa3e8" stroke-width="1.6"/></svg>
<svg class="r" style="left:1192px;top:1043px" width="26" height="28" viewBox="0 0 26 28"><circle cx="13" cy="14" r="12" fill="#e43d5a"/><path d="M8 21l5-13 5 13" fill="none" stroke="#fff" stroke-width="2.4"/></svg>
<div class="r" style="left:1202px;top:1074px;width:6px;height:3px;background:#8a8a8a;border-radius:2px"></div>
<div class="r" style="left:1231px;top:1040px;width:34px;height:36px;background:#edeef6;border-radius:5px"></div>
<svg class="r" style="left:1236px;top:1045px" width="25" height="24" viewBox="0 0 25 24"><rect x="8" y="1" width="16" height="22" rx="1.5" fill="#21a366"/><rect x="8" y="8" width="16" height="8" fill="#107c41"/><rect x="16" y="1" width="8" height="22" fill="#33c481" opacity="0.6"/><rect x="1" y="5.5" width="13" height="13" rx="1.5" fill="#185c37"/><path d="M4.5 8.5l6 7M10.5 8.5l-6 7" stroke="#fff" stroke-width="1.8"/></svg>
<div class="r" style="left:1242px;top:1073px;width:15px;height:3px;background:#0f6cbd;border-radius:2px"></div>
<svg class="r" style="left:1280px;top:1043px" width="26" height="28" viewBox="0 0 26 28"><circle cx="13" cy="14" r="11.5" fill="#e33b2e"/><path d="M13 14L23 8A11.5 11.5 0 0 1 14 25.5z" fill="#f9c117"/><path d="M13 14L14 25.5A11.5 11.5 0 0 1 3 8z" fill="#21a456"/><circle cx="13" cy="14" r="5" fill="#fff"/><circle cx="13" cy="14" r="3.8" fill="#3a82f0"/><path d="M19 2l2 5 3-4" fill="none" stroke="#777" stroke-width="1.3"/></svg>
<svg class="r" style="left:1728px;top:1051px" width="13" height="8" viewBox="0 0 13 8"><path d="M1 7l5.5-5.5L12 7" fill="none" stroke="#222" stroke-width="1.3"/></svg>
<svg class="r" style="left:1756px;top:1047px" width="20" height="16" viewBox="0 0 20 16"><path d="M1 6a13 13 0 0 1 18 0M4 9.5a8.5 8.5 0 0 1 12 0M7 13a4 4 0 0 1 6 0" fill="none" stroke="#222" stroke-width="1.5"/><circle cx="10" cy="15" r="1.3" fill="#222"/></svg>
<svg class="r" style="left:1781px;top:1047px" width="16" height="16" viewBox="0 0 16 16"><path d="M1.5 6h3l4-3.5v11l-4-3.5h-3z" fill="none" stroke="#222" stroke-width="1.2"/><path d="M11 5.5c1 1.5 1 3.5 0 5M13 3.5c2 2.5 2 6.5 0 9" fill="none" stroke="#222" stroke-width="1.2"/></svg>
<div class="t" style="left:1848.00px;top:1042px;font-size:12.5px;color:#1b1b1b;transform:scaleX(0.9208);">13:19</div>
<div class="t" style="left:1816.00px;top:1058px;font-size:12.5px;color:#1b1b1b;transform:scaleX(0.9719);">31/01/2026</div>
<svg class="r" style="left:1884px;top:1048px" width="18" height="16" viewBox="0 0 18 16"><path d="M8 2c-3 0-5 2-5 5v4l-2 2h14l-2-2V7c0-3-2-5-5-5z" fill="#222"/><path d="M6 14.5a2 2 0 0 0 4 0" fill="#222"/><text x="5" y="10" font-size="6" font-family="Liberation Sans" fill="#fff">z</text><text x="11" y="5" font-size="6" font-family="Liberation Sans" fill="#222">z</text></svg>
</body></html>
